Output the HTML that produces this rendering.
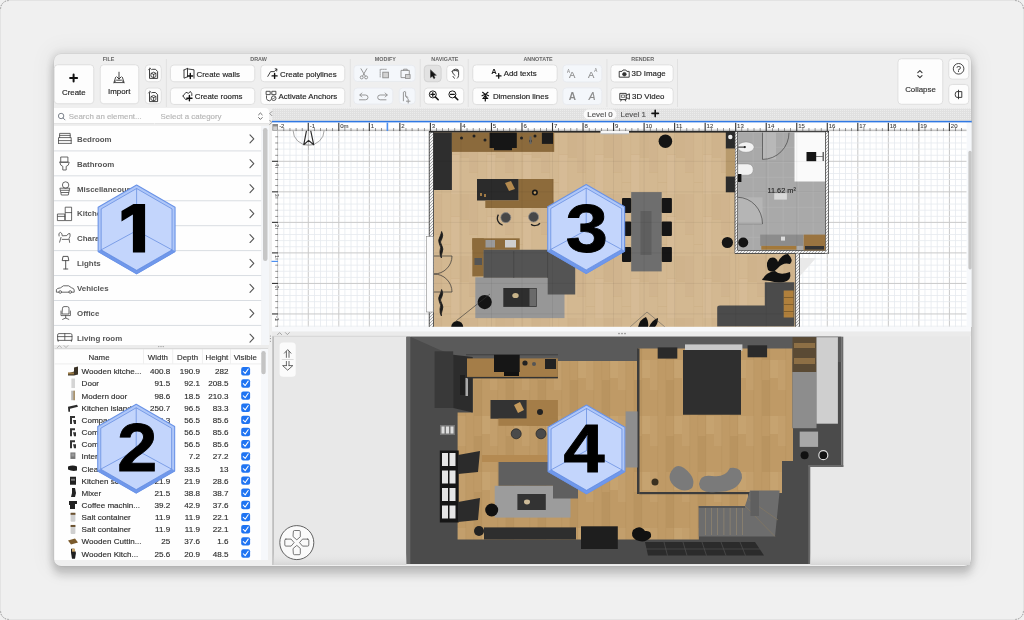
<!DOCTYPE html>
<html><head><meta charset="utf-8">
<style>
*{box-sizing:border-box;margin:0;padding:0}
html,body{width:1024px;height:620px;overflow:hidden;background:#f0f0f0;font-family:"Liberation Sans",sans-serif}
#frame{position:absolute;left:0;top:0;width:1024px;height:620px;border-radius:9px;border:1px solid #e3e3e3;background:#f0f0f0}
#win{position:absolute;left:54px;top:54px;width:917px;height:512px;border-radius:7px;background:#efefef;box-shadow:0 0 0 0.5px rgba(0,0,0,0.06),0 0 6px 3px rgba(0,0,0,0.07),0 0 20px 8px rgba(0,0,0,0.04),0 8px 8px 1px rgba(0,0,0,0.16)}
svg{position:absolute;left:0;top:0;will-change:transform}
text{font-family:"Liberation Sans",sans-serif}
</style></head><body>
<div id="frame"></div>
<div id="win"></div>
<svg width="1024" height="620" viewBox="0 0 1024 620">
<path d="M0.6 8.6 A8 8 0 0 1 8.6 0.6" fill="none" stroke="#777" stroke-width="0.8" stroke-dasharray="1.2 1.6"/>
<path d="M1015.4 0.6 A8 8 0 0 1 1023.4 8.6" fill="none" stroke="#777" stroke-width="0.8" stroke-dasharray="1.2 1.6"/>
<path d="M1023.4 611.4 A8 8 0 0 1 1015.4 619.4" fill="none" stroke="#777" stroke-width="0.8" stroke-dasharray="1.2 1.6"/>
<path d="M8.6 619.4 A8 8 0 0 1 0.6 611.4" fill="none" stroke="#777" stroke-width="0.8" stroke-dasharray="1.2 1.6"/>
<text x="108.50" y="61.47" font-size="5.4" font-weight="bold" fill="#666" stroke="#666" stroke-width="0" text-anchor="middle" >FILE</text>
<text x="258.50" y="61.47" font-size="5.4" font-weight="bold" fill="#666" stroke="#666" stroke-width="0" text-anchor="middle" >DRAW</text>
<text x="385.30" y="61.47" font-size="5.4" font-weight="bold" fill="#666" stroke="#666" stroke-width="0" text-anchor="middle" >MODIFY</text>
<text x="444.80" y="61.47" font-size="5.4" font-weight="bold" fill="#666" stroke="#666" stroke-width="0" text-anchor="middle" >NAVIGATE</text>
<text x="538.00" y="61.47" font-size="5.4" font-weight="bold" fill="#666" stroke="#666" stroke-width="0" text-anchor="middle" >ANNOTATE</text>
<text x="642.70" y="61.47" font-size="5.4" font-weight="bold" fill="#666" stroke="#666" stroke-width="0" text-anchor="middle" >RENDER</text>
<rect x="165.90" y="59.00" width="1.00" height="48.00" rx="0" fill="#e1e1e1" />
<rect x="349.80" y="59.00" width="1.00" height="48.00" rx="0" fill="#e1e1e1" />
<rect x="419.70" y="59.00" width="1.00" height="48.00" rx="0" fill="#e1e1e1" />
<rect x="467.70" y="59.00" width="1.00" height="48.00" rx="0" fill="#e1e1e1" />
<rect x="606.40" y="59.00" width="1.00" height="48.00" rx="0" fill="#e1e1e1" />
<rect x="677.00" y="59.00" width="1.00" height="48.00" rx="0" fill="#e1e1e1" />
<rect x="54.25" y="64.75" width="39.50" height="39.00" rx="3.5" fill="#fdfdfd" stroke="#d9d9d9" stroke-width="0.8"/>
<text x="73.80" y="95.38" font-size="7.9" fill="#222" stroke="#222" stroke-width="0.15" text-anchor="middle" >Create</text>
<rect x="100.25" y="64.75" width="38.50" height="39.00" rx="3.5" fill="#fdfdfd" stroke="#d9d9d9" stroke-width="0.8"/>
<text x="119.20" y="93.88" font-size="7.9" fill="#222" stroke="#222" stroke-width="0.15" text-anchor="middle" >Import</text>
<rect x="145.25" y="64.85" width="16.00" height="16.90" rx="3.5" fill="#fdfdfd" stroke="#d9d9d9" stroke-width="0.8"/>
<rect x="145.25" y="88.05" width="16.00" height="15.70" rx="3.5" fill="#fdfdfd" stroke="#d9d9d9" stroke-width="0.8"/>
<rect x="170.45" y="65.05" width="84.30" height="16.70" rx="3.5" fill="#fdfdfd" stroke="#d9d9d9" stroke-width="0.8"/>
<text x="196.50" y="76.58" font-size="7.9" fill="#222" stroke="#222" stroke-width="0.15" text-anchor="start" >Create walls</text>
<rect x="260.75" y="65.05" width="84.00" height="16.70" rx="3.5" fill="#fdfdfd" stroke="#d9d9d9" stroke-width="0.8"/>
<text x="280.00" y="76.58" font-size="7.9" fill="#222" stroke="#222" stroke-width="0.15" text-anchor="start" >Create polylines</text>
<rect x="170.45" y="87.95" width="84.30" height="16.50" rx="3.5" fill="#fdfdfd" stroke="#d9d9d9" stroke-width="0.8"/>
<text x="194.70" y="98.98" font-size="7.9" fill="#222" stroke="#222" stroke-width="0.15" text-anchor="start" >Create rooms</text>
<rect x="260.75" y="87.95" width="84.00" height="16.50" rx="3.5" fill="#fdfdfd" stroke="#d9d9d9" stroke-width="0.8"/>
<text x="278.50" y="98.98" font-size="7.9" fill="#222" stroke="#222" stroke-width="0.15" text-anchor="start" >Activate Anchors</text>
<rect x="353.85" y="65.25" width="61.30" height="16.20" rx="3.5" fill="#f4f7fb" stroke="#e6e9ee" stroke-width="0.8"/>
<rect x="353.85" y="88.05" width="38.90" height="16.00" rx="3.5" fill="#f4f7fb" stroke="#e6e9ee" stroke-width="0.8"/>
<rect x="399.25" y="88.05" width="15.90" height="16.00" rx="3.5" fill="#f4f7fb" stroke="#e6e9ee" stroke-width="0.8"/>
<rect x="424.25" y="65.25" width="16.90" height="16.50" rx="3.5" fill="#e2e2e2" stroke="#cdcdcd" stroke-width="0.8"/>
<rect x="446.75" y="65.25" width="17.00" height="16.50" rx="3.5" fill="#fdfdfd" stroke="#d9d9d9" stroke-width="0.8"/>
<rect x="424.25" y="88.05" width="39.50" height="16.00" rx="3.5" fill="#fdfdfd" stroke="#d9d9d9" stroke-width="0.8"/>
<rect x="472.75" y="64.85" width="84.40" height="17.10" rx="3.5" fill="#fdfdfd" stroke="#d9d9d9" stroke-width="0.8"/>
<text x="503.70" y="76.48" font-size="7.9" fill="#222" stroke="#222" stroke-width="0.15" text-anchor="start" >Add texts</text>
<rect x="472.75" y="87.85" width="84.40" height="16.70" rx="3.5" fill="#fdfdfd" stroke="#d9d9d9" stroke-width="0.8"/>
<text x="492.90" y="99.08" font-size="7.9" fill="#222" stroke="#222" stroke-width="0.15" text-anchor="start" >Dimension lines</text>
<rect x="562.95" y="64.85" width="38.80" height="17.10" rx="3.5" fill="#f4f7fb" stroke="#e6e9ee" stroke-width="0.8"/>
<rect x="562.95" y="87.85" width="38.80" height="16.70" rx="3.5" fill="#f4f7fb" stroke="#e6e9ee" stroke-width="0.8"/>
<rect x="610.85" y="64.85" width="62.30" height="17.10" rx="3.5" fill="#fdfdfd" stroke="#d9d9d9" stroke-width="0.8"/>
<text x="631.50" y="76.48" font-size="7.9" fill="#222" stroke="#222" stroke-width="0.15" text-anchor="start" >3D Image</text>
<rect x="610.85" y="87.85" width="62.30" height="16.70" rx="3.5" fill="#fdfdfd" stroke="#d9d9d9" stroke-width="0.8"/>
<text x="632.10" y="99.08" font-size="7.9" fill="#222" stroke="#222" stroke-width="0.15" text-anchor="start" >3D Video</text>
<rect x="897.95" y="58.75" width="44.80" height="45.50" rx="3.5" fill="#fdfdfd" stroke="#d9d9d9" stroke-width="0.8"/>
<text x="920.50" y="91.68" font-size="7.9" fill="#333" stroke="#333" stroke-width="0.15" text-anchor="middle" >Collapse</text>
<rect x="948.75" y="58.75" width="20.00" height="20.40" rx="3.5" fill="#fdfdfd" stroke="#d9d9d9" stroke-width="0.8"/>
<rect x="948.75" y="84.45" width="20.00" height="19.80" rx="3.5" fill="#fdfdfd" stroke="#d9d9d9" stroke-width="0.8"/>
<path d="M73.6 74.6 V81.6 M70.1 78.1 H77.1" fill="none" stroke="#111" stroke-width="2" stroke-linecap="round" stroke-linejoin="round" stroke-linecap="butt"/>
<path d="M119 72.2 V79 M116.8 76.8 L119 79 L121.2 76.8" fill="none" stroke="#2a2a2a" stroke-width="0.9" stroke-linecap="round" stroke-linejoin="round" />
<path d="M115.6 77.4 L113.9 82.6 H124.1 L122.4 77.4 M113.9 82.6 L116.4 80.2 H121.6 L124.1 82.6" fill="none" stroke="#2a2a2a" stroke-width="0.85" stroke-linecap="round" stroke-linejoin="round" />
<path d="M149.5 69.5 V78.4 H157.6 V71.5 L155.5 69.3 H152.5" fill="none" stroke="#2a2a2a" stroke-width="0.9" stroke-linecap="round" stroke-linejoin="round" />
<path d="M150 68.2 L148.6 69.8 M150 68.2 L151.5 69.6" fill="none" stroke="#2a2a2a" stroke-width="0.8" stroke-linecap="round" stroke-linejoin="round" />
<path d="M151.3 73.3 L153.6 72.2 L155.9 73.3 V76.6 L153.6 77.7 L151.3 76.6 Z M151.3 73.3 L153.6 74.4 L155.9 73.3 M153.6 74.4 V77.7" fill="none" stroke="#2a2a2a" stroke-width="0.8" stroke-linecap="round" stroke-linejoin="round" />
<path d="M149.5 92.7 V101.60000000000001 H157.6 V94.7 L155.5 92.5 H152.5" fill="none" stroke="#2a2a2a" stroke-width="0.9" stroke-linecap="round" stroke-linejoin="round" />
<path d="M150 91.4 L148.6 93.0 M150 91.4 L151.5 92.8" fill="none" stroke="#2a2a2a" stroke-width="0.8" stroke-linecap="round" stroke-linejoin="round" />
<path d="M151.3 96.5 L153.6 95.4 L155.9 96.5 V99.8 L153.6 100.9 L151.3 99.8 Z M151.3 96.5 L153.6 97.60000000000001 L155.9 96.5 M153.6 97.60000000000001 V100.9" fill="none" stroke="#2a2a2a" stroke-width="0.8" stroke-linecap="round" stroke-linejoin="round" />
<path d="M184 70 L187.5 68.4 L188.5 69 L194 69.8 V78.2 M184 70 V78.2 L187.5 76.8 M187.5 68.4 V76.8" fill="none" stroke="#2a2a2a" stroke-width="0.9" stroke-linecap="round" stroke-linejoin="round" />
<path d="M190.3 73.5 V78.6 M187.9 76 H192.7" fill="none" stroke="#111" stroke-width="1.4" stroke-linecap="round" stroke-linejoin="round" />
<path d="M267.8 76.4 L270.6 71.6 H274.2 L276.8 69.2 M275.2 68.8 L277 69.1 L276.7 71" fill="none" stroke="#2a2a2a" stroke-width="0.9" stroke-linecap="round" stroke-linejoin="round" />
<path d="M274.6 73.4 V78.4 M272.1 75.9 H277.1" fill="none" stroke="#111" stroke-width="1.4" stroke-linecap="round" stroke-linejoin="round" />
<path d="M183 96 L186 92.3 L188.6 93.3 L190.3 91.4 L191.8 93.6 V95.5 M183 96 L185.5 99.5 L187.2 99.6" fill="none" stroke="#2a2a2a" stroke-width="0.9" stroke-linecap="round" stroke-linejoin="round" />
<path d="M189.4 95.5 V100.8 M186.8 98.2 H192" fill="none" stroke="#111" stroke-width="1.4" stroke-linecap="round" stroke-linejoin="round" />
<path d="M266.5 91.3 H270.2 V94.6 H266.5 Z M272.2 91.3 H275.9 V94.6 H272.2 Z" fill="none" stroke="#2a2a2a" stroke-width="0.8" stroke-linecap="round" stroke-linejoin="round" />
<path d="M266.5 95.8 V98.5 Q266.8 100.7 269.6 100.8 Q271 100.5 271 99.8" fill="none" stroke="#2a2a2a" stroke-width="0.8" stroke-linecap="round" stroke-linejoin="round" />
<circle cx="273.7" cy="98.2" r="2.3" fill="none" stroke="#2a2a2a" stroke-width="0.8"/>
<path d="M272.6 98.2 L273.4 99 L274.9 97.4" fill="none" stroke="#2a2a2a" stroke-width="0.6" stroke-linecap="round" stroke-linejoin="round" />
<circle cx="361.7" cy="77.4" r="1.5" fill="none" stroke="#8c8c8c" stroke-width="0.9"/><circle cx="366.1" cy="77.4" r="1.5" fill="none" stroke="#8c8c8c" stroke-width="0.9"/>
<path d="M361 68.8 L365.2 76 M366.8 68.8 L362.6 76" fill="none" stroke="#8c8c8c" stroke-width="0.9" stroke-linecap="round" stroke-linejoin="round" />
<path d="M380.2 77 V69.3 H387.2" fill="none" stroke="#8c8c8c" stroke-width="0.8" stroke-linecap="round" stroke-linejoin="round" stroke-dasharray="1.2 0.9"/>
<rect x="382.8" y="72.2" width="5.6" height="5.6" fill="#d2d2d2" stroke="#8c8c8c" stroke-width="0.9"/>
<path d="M401.4 70.4 H409.3 V77.6 H401.4 Z M403.6 70.4 V69.2 H407.2 V70.4" fill="none" stroke="#8c8c8c" stroke-width="0.9" stroke-linecap="round" stroke-linejoin="round" />
<rect x="405.5" y="74.6" width="4.6" height="3.8" fill="#cfcfcf" stroke="#8c8c8c" stroke-width="0.8"/>
<path d="M360 95 H365.4 Q368 95 368 97.4 Q368 99.8 365.4 99.8 H359.5 M361.8 93 L359.8 95 L361.8 97" fill="none" stroke="#8c8c8c" stroke-width="0.9" stroke-linecap="round" stroke-linejoin="round" />
<path d="M387.2 95 H380.2 Q377.7 95 377.7 97.4 Q377.7 99.8 380.2 99.8 H386 M385.2 93 L387.2 95 L385.2 97" fill="none" stroke="#8c8c8c" stroke-width="0.9" stroke-linecap="round" stroke-linejoin="round" />
<path d="M403.4 100.8 V92.2 L404.8 91.5 M405.6 92 V96.3 L407.6 98.5 M406 96 L408 97.5 M408.2 99.4 V103 M406.4 101.2 H410" fill="none" stroke="#8c8c8c" stroke-width="0.9" stroke-linecap="round" stroke-linejoin="round" />
<path d="M430.6 70.2 L430.6 77.6 L432.4 76 L433.8 78.6 L435 78 L433.7 75.4 L436 75.2 Z" fill="#111" stroke="#111" stroke-width="0.5" stroke-linecap="round" stroke-linejoin="round" />
<path d="M452.2 71.4 L453.2 70 Q455.5 68.6 457.8 69.5 L458.6 71.6 V75.4 Q458.4 77.4 457.4 78.2 M452.2 71.4 L453.2 73.8 L455 75.4 M454.4 78.3 L453 76.4" fill="none" stroke="#2a2a2a" stroke-width="0.9" stroke-linecap="round" stroke-linejoin="round" />
<path d="M453.8 70.6 Q456 70 458 71" fill="none" stroke="#555" stroke-width="1.4" stroke-linecap="round" stroke-linejoin="round" />
<circle cx="432.8" cy="94.4" r="3.5" fill="none" stroke="#111" stroke-width="0.95"/>
<path d="M435.3 96.9 L438.2 99.8" fill="none" stroke="#111" stroke-width="1.5" stroke-linecap="round" stroke-linejoin="round" />
<path d="M430.90000000000003 94.4 H434.7 M432.8 92.5 V96.3" fill="none" stroke="#111" stroke-width="1.2" stroke-linecap="round" stroke-linejoin="round" stroke-linecap="butt"/>
<circle cx="452.4" cy="94.4" r="3.5" fill="none" stroke="#111" stroke-width="0.95"/>
<path d="M454.9 96.9 L457.79999999999995 99.8" fill="none" stroke="#111" stroke-width="1.5" stroke-linecap="round" stroke-linejoin="round" />
<path d="M450.5 94.4 H454.29999999999995" fill="none" stroke="#111" stroke-width="1.2" stroke-linecap="round" stroke-linejoin="round" stroke-linecap="butt"/>
<text x="491.20" y="74.37" font-size="7.6" font-weight="bold" fill="#1a1a1a" stroke="#1a1a1a" stroke-width="0" text-anchor="start" >A</text>
<path d="M498.7 73.6 V78.2 M496.4 75.9 H501" fill="none" stroke="#111" stroke-width="1.3" stroke-linecap="round" stroke-linejoin="round" />
<path d="M482.6 92.3 L485.3 94.4 L488 92.3 M482 95.7 L485.3 94.2 L488.6 95.7 M483.5 97.8 L485.3 95.6 L487.1 97.8" fill="none" stroke="#111" stroke-width="1.1" stroke-linecap="round" stroke-linejoin="round" />
<path d="M485.3 96 V101 M482.8 98.5 H487.8" fill="none" stroke="#111" stroke-width="1.2" stroke-linecap="round" stroke-linejoin="round" />
<text x="572.20" y="77.66" font-size="9.5" fill="#8a8a8a" stroke="#8a8a8a" stroke-width="0.15" text-anchor="middle" >A</text>
<text x="568.50" y="72.64" font-size="4.5" fill="#8a8a8a" stroke="#8a8a8a" stroke-width="0.08" text-anchor="middle" >A</text>
<text x="591.20" y="77.66" font-size="9.5" fill="#8a8a8a" stroke="#8a8a8a" stroke-width="0.15" text-anchor="middle" >A</text>
<text x="595.80" y="72.24" font-size="4.5" fill="#8a8a8a" stroke="#8a8a8a" stroke-width="0.08" text-anchor="middle" >A</text>
<text x="572.40" y="99.84" font-size="10" font-weight="bold" fill="#8a8a8a" stroke="#8a8a8a" stroke-width="0" text-anchor="middle" >A</text>
<text x="592.00" y="99.84" font-size="10" fill="#8a8a8a" stroke="#8a8a8a" stroke-width="0.15" text-anchor="middle" font-style="italic">A</text>
<path d="M619.6 71.4 H622 L623 70 H625.8 L626.8 71.4 H629.2 V77.2 H619.6 Z" fill="none" stroke="#2a2a2a" stroke-width="0.9" stroke-linecap="round" stroke-linejoin="round" />
<circle cx="624.4" cy="74.2" r="1.8" fill="#333" stroke="#2a2a2a" stroke-width="0.7"/>
<path d="M620.2 93.4 H626.2 V99.6 H620.2 Z M626.2 95.4 L629.4 93.8 V99.2 L626.2 97.6 M621.4 99.6 L620.8 101 M625 99.6 L625.6 101" fill="none" stroke="#2a2a2a" stroke-width="0.9" stroke-linecap="round" stroke-linejoin="round" />
<path d="M621.8 95 H624.6 V97.4 H621.8 Z" fill="none" stroke="#2a2a2a" stroke-width="0.6" stroke-linecap="round" stroke-linejoin="round" />
<path d="M917.8 72.6 L919.9 70.6 L922 72.6 M917.8 75.6 L919.9 77.6 L922 75.6" fill="none" stroke="#333" stroke-width="1.1" stroke-linecap="round" stroke-linejoin="round" />
<circle cx="958.6" cy="68.8" r="5.3" fill="none" stroke="#333" stroke-width="0.9"/>
<text x="958.60" y="71.73" font-size="8.6" fill="#333" stroke="#333" stroke-width="0.15" text-anchor="middle" >?</text>
<path d="M958.5 91.6 H961.8 V97.4 H958.5 M958.5 91.6 H957 Q955.2 91.6 955.2 94.5 Q955.2 97.4 957 97.4 H958.5 M958.5 90.2 V98.8" fill="none" stroke="#333" stroke-width="0.95" stroke-linecap="round" stroke-linejoin="round" />
<path d="M54 108 H265 Q269 108 269 112 V123 H54 Z" fill="#fefefe"/>
<rect x="54.00" y="123.00" width="100.00" height="1.20" rx="0" fill="#e4e4e4" />
<rect x="155.00" y="123.00" width="114.00" height="1.20" rx="0" fill="#e4e4e4" />
<circle cx="61.1" cy="116" r="2.7" fill="none" stroke="#6f7680" stroke-width="0.9"/>
<path d="M63.1 118 L65 119.9" fill="none" stroke="#6f7680" stroke-width="0.9" stroke-linecap="round" stroke-linejoin="round" />
<text x="68.80" y="119.08" font-size="7.9" fill="#b5b5b5" stroke="#b5b5b5" stroke-width="0.15" text-anchor="start" >Search an element...</text>
<text x="160.60" y="119.08" font-size="7.9" fill="#b5b5b5" stroke="#b5b5b5" stroke-width="0.15" text-anchor="start" >Select a category</text>
<path d="M258.6 114.8 L260.4 113 L262.2 114.8 M258.6 117.6 L260.4 119.4 L262.2 117.6" fill="none" stroke="#555" stroke-width="0.9" stroke-linecap="round" stroke-linejoin="round" />
<rect x="54.00" y="126.00" width="207.50" height="219.00" rx="0" fill="#fefefe" />
<rect x="54.00" y="150.40" width="207.50" height="1.00" rx="0" fill="#d9dde2" />
<text x="77.00" y="141.68" font-size="7.9" font-weight="bold" fill="#555" stroke="#555" stroke-width="0" text-anchor="start" >Bedroom</text>
<path d="M250 134.8 L253.8 138.8 L250 142.8" fill="none" stroke="#555" stroke-width="1.1" stroke-linecap="round" stroke-linejoin="round" />
<rect x="54.00" y="175.33" width="207.50" height="1.00" rx="0" fill="#d9dde2" />
<text x="77.00" y="166.61" font-size="7.9" font-weight="bold" fill="#555" stroke="#555" stroke-width="0" text-anchor="start" >Bathroom</text>
<path d="M250 159.73 L253.8 163.73 L250 167.73" fill="none" stroke="#555" stroke-width="1.1" stroke-linecap="round" stroke-linejoin="round" />
<rect x="54.00" y="200.26" width="207.50" height="1.00" rx="0" fill="#d9dde2" />
<text x="77.00" y="191.54" font-size="7.9" font-weight="bold" fill="#555" stroke="#555" stroke-width="0" text-anchor="start" >Miscellaneous</text>
<path d="M250 184.66 L253.8 188.66 L250 192.66" fill="none" stroke="#555" stroke-width="1.1" stroke-linecap="round" stroke-linejoin="round" />
<rect x="54.00" y="225.19" width="207.50" height="1.00" rx="0" fill="#d9dde2" />
<text x="77.00" y="216.47" font-size="7.9" font-weight="bold" fill="#555" stroke="#555" stroke-width="0" text-anchor="start" >Kitchen</text>
<path d="M250 209.59 L253.8 213.59 L250 217.59" fill="none" stroke="#555" stroke-width="1.1" stroke-linecap="round" stroke-linejoin="round" />
<rect x="54.00" y="250.12" width="207.50" height="1.00" rx="0" fill="#d9dde2" />
<text x="77.00" y="241.40" font-size="7.9" font-weight="bold" fill="#555" stroke="#555" stroke-width="0" text-anchor="start" >Characters</text>
<path d="M250 234.52 L253.8 238.52 L250 242.52" fill="none" stroke="#555" stroke-width="1.1" stroke-linecap="round" stroke-linejoin="round" />
<rect x="54.00" y="275.05" width="207.50" height="1.00" rx="0" fill="#d9dde2" />
<text x="77.00" y="266.33" font-size="7.9" font-weight="bold" fill="#555" stroke="#555" stroke-width="0" text-anchor="start" >Lights</text>
<path d="M250 259.45000000000005 L253.8 263.45000000000005 L250 267.45000000000005" fill="none" stroke="#555" stroke-width="1.1" stroke-linecap="round" stroke-linejoin="round" />
<rect x="54.00" y="299.98" width="207.50" height="1.00" rx="0" fill="#d9dde2" />
<text x="77.00" y="291.26" font-size="7.9" font-weight="bold" fill="#555" stroke="#555" stroke-width="0" text-anchor="start" >Vehicles</text>
<path d="M250 284.38 L253.8 288.38 L250 292.38" fill="none" stroke="#555" stroke-width="1.1" stroke-linecap="round" stroke-linejoin="round" />
<rect x="54.00" y="324.91" width="207.50" height="1.00" rx="0" fill="#d9dde2" />
<text x="77.00" y="316.19" font-size="7.9" font-weight="bold" fill="#555" stroke="#555" stroke-width="0" text-anchor="start" >Office</text>
<path d="M250 309.31 L253.8 313.31 L250 317.31" fill="none" stroke="#555" stroke-width="1.1" stroke-linecap="round" stroke-linejoin="round" />
<text x="77.00" y="341.12" font-size="7.9" font-weight="bold" fill="#555" stroke="#555" stroke-width="0" text-anchor="start" >Living room</text>
<path d="M250 334.24 L253.8 338.24 L250 342.24" fill="none" stroke="#555" stroke-width="1.1" stroke-linecap="round" stroke-linejoin="round" />
<rect x="261.50" y="126.00" width="7.50" height="219.00" rx="0" fill="#f4f6f9" />
<rect x="263.00" y="128.00" width="4.50" height="133.00" rx="2.2" fill="#c6c6c6" />
<path d="M58.5 143.4 V137.6 H71.2 V143.4 M58.5 140.6 H71.2 M58.5 143.4 H71.2 M59.6 137.6 V133.4 H70.2 V137.6 M59.6 135.4 H70.2" fill="none" stroke="#444" stroke-width="0.8" stroke-linecap="round" stroke-linejoin="round" />
<path d="M61.1 157 H67.9 V162.2 H61.1 Z M59.8 162.2 H69.2 Q68.8 166 66.2 166.4 V170 H62.8 V166.4 Q60.2 166 59.8 162.2" fill="none" stroke="#444" stroke-width="0.8" stroke-linecap="round" stroke-linejoin="round" />
<path d="M60.3 188.2 H69.7 L68.3 195 H61.7 Z M61 190.3 H69 M61.4 192.5 H68.6" fill="none" stroke="#444" stroke-width="0.8" stroke-linecap="round" stroke-linejoin="round" />
<circle cx="65.6" cy="185" r="3.2" fill="none" stroke="#444" stroke-width="0.8"/>
<path d="M57.8 214 H64.8 V220.6 H57.8 Z M57.8 216.4 H64.8 M65.6 207.2 H71.6 V220.6 H65.6 Z M65.6 212.6 H71.6" fill="none" stroke="#444" stroke-width="0.8" stroke-linecap="round" stroke-linejoin="round" />
<path d="M59 236 Q58 232.8 60.4 232.4 Q62.6 233.4 62.2 235.8 L66.8 235.6 Q68 233 70 233.6 Q70.6 236.4 69 238.4 L69.6 242.4 M61 237.4 L59.6 242.2 M62.2 239.4 H68.4" fill="none" stroke="#444" stroke-width="0.8" stroke-linecap="round" stroke-linejoin="round" />
<path d="M63.4 256.4 H68 L68.8 260.6 H62.6 Z M65.7 260.6 V268.8 M63.6 269 H67.8" fill="none" stroke="#444" stroke-width="0.9" stroke-linecap="round" stroke-linejoin="round" />
<path d="M56.4 291.8 V289.6 Q57 288.2 60.6 287.8 L63.4 285.8 H68.6 L71.6 287.8 Q74 288.2 74.2 290 V291.8 Z" fill="none" stroke="#444" stroke-width="0.8" stroke-linecap="round" stroke-linejoin="round" />
<circle cx="60.2" cy="292" r="1.3" fill="#fff" stroke="#444" stroke-width="0.8"/><circle cx="70.2" cy="292" r="1.3" fill="#fff" stroke="#444" stroke-width="0.8"/>
<path d="M62.4 308.4 Q62.4 306.6 64 306.6 H67.4 Q69 306.6 69 308.4 V314 H62.4 Z M61 311 V315.6 H70.4 V311 M65.7 315.6 V318 M62.6 319.4 L65.7 318 L68.8 319.4" fill="none" stroke="#444" stroke-width="0.8" stroke-linecap="round" stroke-linejoin="round" />
<path d="M57.6 340 V335 Q57.6 333.6 59 333.6 H70.6 Q72 333.6 72 335 V340 Z M57.6 336.6 H72 M64.8 333.6 V340 M58.2 340 V341.4 M71.4 340 V341.4" fill="none" stroke="#444" stroke-width="0.8" stroke-linecap="round" stroke-linejoin="round" />
<rect x="54.00" y="345.00" width="215.00" height="4.00" rx="0" fill="#ececec" />
<path d="M57.4 347.6 L59.4 345.6 L61.4 347.6 M64 345.6 L66 347.6 L68 345.6" fill="none" stroke="#999" stroke-width="0.7" stroke-linecap="round" stroke-linejoin="round" />
<circle cx="158.8" cy="346.6" r="0.55" fill="#888"/>
<circle cx="161" cy="346.6" r="0.55" fill="#888"/>
<circle cx="163.2" cy="346.6" r="0.55" fill="#888"/>
<rect x="54.60" y="349.00" width="213.40" height="211.00" rx="0" fill="#fefefe" />
<rect x="54.60" y="348.40" width="213.40" height="0.80" rx="0" fill="#cdcdcd" />
<rect x="54.60" y="363.60" width="206.40" height="0.70" rx="0" fill="#e6e6e6" />
<rect x="143.15" y="349.00" width="0.70" height="14.60" rx="0" fill="#e8e8e8" />
<rect x="172.45" y="349.00" width="0.70" height="14.60" rx="0" fill="#e8e8e8" />
<rect x="201.95" y="349.00" width="0.70" height="14.60" rx="0" fill="#e8e8e8" />
<rect x="230.15" y="349.00" width="0.70" height="14.60" rx="0" fill="#e8e8e8" />
<rect x="261.00" y="349.00" width="7.00" height="211.00" rx="0" fill="#f6f8fb" />
<rect x="261.30" y="351.00" width="4.40" height="23.30" rx="2.2" fill="#c4c4c4" />
<text x="99.00" y="360.08" font-size="7.9" fill="#333" stroke="#333" stroke-width="0.15" text-anchor="middle" >Name</text>
<text x="157.90" y="360.08" font-size="7.9" fill="#333" stroke="#333" stroke-width="0.15" text-anchor="middle" >Width</text>
<text x="187.50" y="360.08" font-size="7.9" fill="#333" stroke="#333" stroke-width="0.15" text-anchor="middle" >Depth</text>
<text x="216.90" y="360.08" font-size="7.9" fill="#333" stroke="#333" stroke-width="0.15" text-anchor="middle" >Height</text>
<text x="245.30" y="360.08" font-size="7.9" fill="#333" stroke="#333" stroke-width="0.15" text-anchor="middle" >Visible</text>
<text x="81.60" y="374.33" font-size="8.05" fill="#2e2e2e" stroke="#2e2e2e" stroke-width="0.15" text-anchor="start" >Wooden kitche...</text>
<text x="170.20" y="374.33" font-size="8.05" fill="#2e2e2e" stroke="#2e2e2e" stroke-width="0.15" text-anchor="end" >400.8</text>
<text x="199.90" y="374.33" font-size="8.05" fill="#2e2e2e" stroke="#2e2e2e" stroke-width="0.15" text-anchor="end" >190.9</text>
<text x="228.50" y="374.33" font-size="8.05" fill="#2e2e2e" stroke="#2e2e2e" stroke-width="0.15" text-anchor="end" >282</text>
<rect x="241.20" y="367.10" width="8.90" height="8.40" rx="2" fill="#1f74f2" />
<path d="M243.3 371.5 L245.2 373.4 L248.2 369.0" fill="none" stroke="#fff" stroke-width="1.05" stroke-linecap="round" stroke-linejoin="round" />
<text x="81.60" y="386.48" font-size="8.05" fill="#2e2e2e" stroke="#2e2e2e" stroke-width="0.15" text-anchor="start" >Door</text>
<text x="170.20" y="386.48" font-size="8.05" fill="#2e2e2e" stroke="#2e2e2e" stroke-width="0.15" text-anchor="end" >91.5</text>
<text x="199.90" y="386.48" font-size="8.05" fill="#2e2e2e" stroke="#2e2e2e" stroke-width="0.15" text-anchor="end" >92.1</text>
<text x="228.50" y="386.48" font-size="8.05" fill="#2e2e2e" stroke="#2e2e2e" stroke-width="0.15" text-anchor="end" >208.5</text>
<rect x="241.20" y="379.25" width="8.90" height="8.40" rx="2" fill="#1f74f2" />
<path d="M243.3 383.65 L245.2 385.54999999999995 L248.2 381.15" fill="none" stroke="#fff" stroke-width="1.05" stroke-linecap="round" stroke-linejoin="round" />
<text x="81.60" y="398.63" font-size="8.05" fill="#2e2e2e" stroke="#2e2e2e" stroke-width="0.15" text-anchor="start" >Modern door</text>
<text x="170.20" y="398.63" font-size="8.05" fill="#2e2e2e" stroke="#2e2e2e" stroke-width="0.15" text-anchor="end" >98.6</text>
<text x="199.90" y="398.63" font-size="8.05" fill="#2e2e2e" stroke="#2e2e2e" stroke-width="0.15" text-anchor="end" >18.5</text>
<text x="228.50" y="398.63" font-size="8.05" fill="#2e2e2e" stroke="#2e2e2e" stroke-width="0.15" text-anchor="end" >210.3</text>
<rect x="241.20" y="391.40" width="8.90" height="8.40" rx="2" fill="#1f74f2" />
<path d="M243.3 395.8 L245.2 397.7 L248.2 393.3" fill="none" stroke="#fff" stroke-width="1.05" stroke-linecap="round" stroke-linejoin="round" />
<text x="81.60" y="410.78" font-size="8.05" fill="#2e2e2e" stroke="#2e2e2e" stroke-width="0.15" text-anchor="start" >Kitchen island</text>
<text x="170.20" y="410.78" font-size="8.05" fill="#2e2e2e" stroke="#2e2e2e" stroke-width="0.15" text-anchor="end" >250.7</text>
<text x="199.90" y="410.78" font-size="8.05" fill="#2e2e2e" stroke="#2e2e2e" stroke-width="0.15" text-anchor="end" >96.5</text>
<text x="228.50" y="410.78" font-size="8.05" fill="#2e2e2e" stroke="#2e2e2e" stroke-width="0.15" text-anchor="end" >83.3</text>
<rect x="241.20" y="403.55" width="8.90" height="8.40" rx="2" fill="#1f74f2" />
<path d="M243.3 407.95 L245.2 409.84999999999997 L248.2 405.45" fill="none" stroke="#fff" stroke-width="1.05" stroke-linecap="round" stroke-linejoin="round" />
<text x="81.60" y="422.93" font-size="8.05" fill="#2e2e2e" stroke="#2e2e2e" stroke-width="0.15" text-anchor="start" >Compact oven</text>
<text x="170.20" y="422.93" font-size="8.05" fill="#2e2e2e" stroke="#2e2e2e" stroke-width="0.15" text-anchor="end" >56.3</text>
<text x="199.90" y="422.93" font-size="8.05" fill="#2e2e2e" stroke="#2e2e2e" stroke-width="0.15" text-anchor="end" >56.5</text>
<text x="228.50" y="422.93" font-size="8.05" fill="#2e2e2e" stroke="#2e2e2e" stroke-width="0.15" text-anchor="end" >85.6</text>
<rect x="241.20" y="415.70" width="8.90" height="8.40" rx="2" fill="#1f74f2" />
<path d="M243.3 420.1 L245.2 422.0 L248.2 417.6" fill="none" stroke="#fff" stroke-width="1.05" stroke-linecap="round" stroke-linejoin="round" />
<text x="81.60" y="435.08" font-size="8.05" fill="#2e2e2e" stroke="#2e2e2e" stroke-width="0.15" text-anchor="start" >Compact oven</text>
<text x="170.20" y="435.08" font-size="8.05" fill="#2e2e2e" stroke="#2e2e2e" stroke-width="0.15" text-anchor="end" >56.3</text>
<text x="199.90" y="435.08" font-size="8.05" fill="#2e2e2e" stroke="#2e2e2e" stroke-width="0.15" text-anchor="end" >56.5</text>
<text x="228.50" y="435.08" font-size="8.05" fill="#2e2e2e" stroke="#2e2e2e" stroke-width="0.15" text-anchor="end" >85.6</text>
<rect x="241.20" y="427.85" width="8.90" height="8.40" rx="2" fill="#1f74f2" />
<path d="M243.3 432.25 L245.2 434.15 L248.2 429.75" fill="none" stroke="#fff" stroke-width="1.05" stroke-linecap="round" stroke-linejoin="round" />
<text x="81.60" y="447.23" font-size="8.05" fill="#2e2e2e" stroke="#2e2e2e" stroke-width="0.15" text-anchor="start" >Compact oven</text>
<text x="170.20" y="447.23" font-size="8.05" fill="#2e2e2e" stroke="#2e2e2e" stroke-width="0.15" text-anchor="end" >56.3</text>
<text x="199.90" y="447.23" font-size="8.05" fill="#2e2e2e" stroke="#2e2e2e" stroke-width="0.15" text-anchor="end" >56.5</text>
<text x="228.50" y="447.23" font-size="8.05" fill="#2e2e2e" stroke="#2e2e2e" stroke-width="0.15" text-anchor="end" >85.6</text>
<rect x="241.20" y="440.00" width="8.90" height="8.40" rx="2" fill="#1f74f2" />
<path d="M243.3 444.4 L245.2 446.29999999999995 L248.2 441.9" fill="none" stroke="#fff" stroke-width="1.05" stroke-linecap="round" stroke-linejoin="round" />
<text x="81.60" y="459.38" font-size="8.05" fill="#2e2e2e" stroke="#2e2e2e" stroke-width="0.15" text-anchor="start" >Interior light</text>
<text x="170.20" y="459.38" font-size="8.05" fill="#2e2e2e" stroke="#2e2e2e" stroke-width="0.15" text-anchor="end" >7.2</text>
<text x="199.90" y="459.38" font-size="8.05" fill="#2e2e2e" stroke="#2e2e2e" stroke-width="0.15" text-anchor="end" >7.2</text>
<text x="228.50" y="459.38" font-size="8.05" fill="#2e2e2e" stroke="#2e2e2e" stroke-width="0.15" text-anchor="end" >27.2</text>
<rect x="241.20" y="452.15" width="8.90" height="8.40" rx="2" fill="#1f74f2" />
<path d="M243.3 456.55 L245.2 458.45 L248.2 454.05" fill="none" stroke="#fff" stroke-width="1.05" stroke-linecap="round" stroke-linejoin="round" />
<text x="81.60" y="471.53" font-size="8.05" fill="#2e2e2e" stroke="#2e2e2e" stroke-width="0.15" text-anchor="start" >Cleaning...</text>
<text x="170.20" y="471.53" font-size="8.05" fill="#2e2e2e" stroke="#2e2e2e" stroke-width="0.15" text-anchor="end" >33.5</text>
<text x="199.90" y="471.53" font-size="8.05" fill="#2e2e2e" stroke="#2e2e2e" stroke-width="0.15" text-anchor="end" >33.5</text>
<text x="228.50" y="471.53" font-size="8.05" fill="#2e2e2e" stroke="#2e2e2e" stroke-width="0.15" text-anchor="end" >13</text>
<rect x="241.20" y="464.30" width="8.90" height="8.40" rx="2" fill="#1f74f2" />
<path d="M243.3 468.7 L245.2 470.59999999999997 L248.2 466.2" fill="none" stroke="#fff" stroke-width="1.05" stroke-linecap="round" stroke-linejoin="round" />
<text x="81.60" y="483.68" font-size="8.05" fill="#2e2e2e" stroke="#2e2e2e" stroke-width="0.15" text-anchor="start" >Kitchen scale</text>
<text x="170.20" y="483.68" font-size="8.05" fill="#2e2e2e" stroke="#2e2e2e" stroke-width="0.15" text-anchor="end" >21.9</text>
<text x="199.90" y="483.68" font-size="8.05" fill="#2e2e2e" stroke="#2e2e2e" stroke-width="0.15" text-anchor="end" >21.9</text>
<text x="228.50" y="483.68" font-size="8.05" fill="#2e2e2e" stroke="#2e2e2e" stroke-width="0.15" text-anchor="end" >28.6</text>
<rect x="241.20" y="476.45" width="8.90" height="8.40" rx="2" fill="#1f74f2" />
<path d="M243.3 480.85 L245.2 482.75 L248.2 478.35" fill="none" stroke="#fff" stroke-width="1.05" stroke-linecap="round" stroke-linejoin="round" />
<text x="81.60" y="495.83" font-size="8.05" fill="#2e2e2e" stroke="#2e2e2e" stroke-width="0.15" text-anchor="start" >Mixer</text>
<text x="170.20" y="495.83" font-size="8.05" fill="#2e2e2e" stroke="#2e2e2e" stroke-width="0.15" text-anchor="end" >21.5</text>
<text x="199.90" y="495.83" font-size="8.05" fill="#2e2e2e" stroke="#2e2e2e" stroke-width="0.15" text-anchor="end" >38.8</text>
<text x="228.50" y="495.83" font-size="8.05" fill="#2e2e2e" stroke="#2e2e2e" stroke-width="0.15" text-anchor="end" >38.7</text>
<rect x="241.20" y="488.60" width="8.90" height="8.40" rx="2" fill="#1f74f2" />
<path d="M243.3 493.0 L245.2 494.9 L248.2 490.5" fill="none" stroke="#fff" stroke-width="1.05" stroke-linecap="round" stroke-linejoin="round" />
<text x="81.60" y="507.98" font-size="8.05" fill="#2e2e2e" stroke="#2e2e2e" stroke-width="0.15" text-anchor="start" >Coffee machin...</text>
<text x="170.20" y="507.98" font-size="8.05" fill="#2e2e2e" stroke="#2e2e2e" stroke-width="0.15" text-anchor="end" >39.2</text>
<text x="199.90" y="507.98" font-size="8.05" fill="#2e2e2e" stroke="#2e2e2e" stroke-width="0.15" text-anchor="end" >42.9</text>
<text x="228.50" y="507.98" font-size="8.05" fill="#2e2e2e" stroke="#2e2e2e" stroke-width="0.15" text-anchor="end" >37.6</text>
<rect x="241.20" y="500.75" width="8.90" height="8.40" rx="2" fill="#1f74f2" />
<path d="M243.3 505.15 L245.2 507.04999999999995 L248.2 502.65" fill="none" stroke="#fff" stroke-width="1.05" stroke-linecap="round" stroke-linejoin="round" />
<text x="81.60" y="520.13" font-size="8.05" fill="#2e2e2e" stroke="#2e2e2e" stroke-width="0.15" text-anchor="start" >Salt container</text>
<text x="170.20" y="520.13" font-size="8.05" fill="#2e2e2e" stroke="#2e2e2e" stroke-width="0.15" text-anchor="end" >11.9</text>
<text x="199.90" y="520.13" font-size="8.05" fill="#2e2e2e" stroke="#2e2e2e" stroke-width="0.15" text-anchor="end" >11.9</text>
<text x="228.50" y="520.13" font-size="8.05" fill="#2e2e2e" stroke="#2e2e2e" stroke-width="0.15" text-anchor="end" >22.1</text>
<rect x="241.20" y="512.90" width="8.90" height="8.40" rx="2" fill="#1f74f2" />
<path d="M243.3 517.3000000000001 L245.2 519.2 L248.2 514.8000000000001" fill="none" stroke="#fff" stroke-width="1.05" stroke-linecap="round" stroke-linejoin="round" />
<text x="81.60" y="532.28" font-size="8.05" fill="#2e2e2e" stroke="#2e2e2e" stroke-width="0.15" text-anchor="start" >Salt container</text>
<text x="170.20" y="532.28" font-size="8.05" fill="#2e2e2e" stroke="#2e2e2e" stroke-width="0.15" text-anchor="end" >11.9</text>
<text x="199.90" y="532.28" font-size="8.05" fill="#2e2e2e" stroke="#2e2e2e" stroke-width="0.15" text-anchor="end" >11.9</text>
<text x="228.50" y="532.28" font-size="8.05" fill="#2e2e2e" stroke="#2e2e2e" stroke-width="0.15" text-anchor="end" >22.1</text>
<rect x="241.20" y="525.05" width="8.90" height="8.40" rx="2" fill="#1f74f2" />
<path d="M243.3 529.45 L245.2 531.35 L248.2 526.95" fill="none" stroke="#fff" stroke-width="1.05" stroke-linecap="round" stroke-linejoin="round" />
<text x="81.60" y="544.43" font-size="8.05" fill="#2e2e2e" stroke="#2e2e2e" stroke-width="0.15" text-anchor="start" >Wooden Cuttin...</text>
<text x="170.20" y="544.43" font-size="8.05" fill="#2e2e2e" stroke="#2e2e2e" stroke-width="0.15" text-anchor="end" >25</text>
<text x="199.90" y="544.43" font-size="8.05" fill="#2e2e2e" stroke="#2e2e2e" stroke-width="0.15" text-anchor="end" >37.6</text>
<text x="228.50" y="544.43" font-size="8.05" fill="#2e2e2e" stroke="#2e2e2e" stroke-width="0.15" text-anchor="end" >1.6</text>
<rect x="241.20" y="537.20" width="8.90" height="8.40" rx="2" fill="#1f74f2" />
<path d="M243.3 541.6 L245.2 543.5 L248.2 539.1" fill="none" stroke="#fff" stroke-width="1.05" stroke-linecap="round" stroke-linejoin="round" />
<text x="81.60" y="556.58" font-size="8.05" fill="#2e2e2e" stroke="#2e2e2e" stroke-width="0.15" text-anchor="start" >Wooden Kitch...</text>
<text x="170.20" y="556.58" font-size="8.05" fill="#2e2e2e" stroke="#2e2e2e" stroke-width="0.15" text-anchor="end" >25.6</text>
<text x="199.90" y="556.58" font-size="8.05" fill="#2e2e2e" stroke="#2e2e2e" stroke-width="0.15" text-anchor="end" >20.9</text>
<text x="228.50" y="556.58" font-size="8.05" fill="#2e2e2e" stroke="#2e2e2e" stroke-width="0.15" text-anchor="end" >48.5</text>
<rect x="241.20" y="549.35" width="8.90" height="8.40" rx="2" fill="#1f74f2" />
<path d="M243.3 553.75 L245.2 555.65 L248.2 551.25" fill="none" stroke="#fff" stroke-width="1.05" stroke-linecap="round" stroke-linejoin="round" />
<g transform="translate(73,371.40)"><path d="M-5 2 L1 0 V-4 L5 -5 V3 L1 4 L-5 4 Z" fill="#3a3226"/><rect x="-5" y="1" width="6" height="2" fill="#9a7a45"/></g>
<g transform="translate(73,383.55)"><rect x="-1.6" y="-5" width="3.6" height="9.5" fill="#d5d5d5"/></g>
<g transform="translate(73,395.70)"><rect x="-1.8" y="-5" width="3.8" height="9.5" fill="#b8b8b8"/><rect x="0.6" y="-5" width="1" height="9.5" fill="#a07a3a"/></g>
<g transform="translate(73,407.85)"><path d="M-5 -1 L4 -3 L5 -1 L-3 1 L-3 4 L-4.6 4 Z" fill="#2b2b2b"/></g>
<g transform="translate(73,420.00)"><path d="M-3 -4 H2 V-2 H-1 V4 H-3 Z M0 0 H3 V4 H1 Z" fill="#333"/></g>
<g transform="translate(73,432.15)"><path d="M-3 -4 H2 V-2 H-1 V4 H-3 Z M0 0 H3 V4 H1 Z" fill="#333"/></g>
<g transform="translate(73,444.30)"><path d="M-3 -4 H2 V-2 H-1 V4 H-3 Z M0 0 H3 V4 H1 Z" fill="#333"/></g>
<g transform="translate(73,456.45)"><rect x="-2.6" y="-4" width="5" height="6.5" fill="#777"/><rect x="-1.6" y="-3" width="3" height="3" fill="#999"/></g>
<g transform="translate(73,468.60)"><path d="M-5 -2 Q0 -4 4 -2 L4 2 Q-1 3 -5 1 Z" fill="#1f1f1f"/></g>
<g transform="translate(73,480.75)"><path d="M-3 -4 H3 V4 H-3 Z" fill="#222"/><rect x="-2" y="-2" width="4" height="2" fill="#777"/></g>
<g transform="translate(73,492.90)"><path d="M-1 -5 L2 -5 L3 0 L2 4 L-2 4 L-1 0 Z" fill="#222"/></g>
<g transform="translate(73,505.05)"><path d="M-4 -4 H4 V-1 H2 V4 H-3 V0 H-4 Z" fill="#222"/></g>
<g transform="translate(73,517.20)"><rect x="-2.4" y="-4.4" width="4.8" height="9" rx="1" fill="#cfcfcf"/><rect x="-2.4" y="-4.4" width="4.8" height="2" fill="#6b5230"/></g>
<g transform="translate(73,529.35)"><rect x="-2.4" y="-4.4" width="4.8" height="9" rx="1" fill="#cfcfcf"/><rect x="-2.4" y="-4.4" width="4.8" height="2" fill="#6b5230"/></g>
<g transform="translate(73,541.50)"><path d="M-5 -1 L2 -3 L5 1 L-2 3 Z" fill="#7a5a2c"/></g>
<g transform="translate(73,553.65)"><path d="M-2 -5 L1 -5 L3 -1 L2 5 L-1 5 L-2 -1 Z" fill="#1f1f1f"/><rect x="-1" y="-5" width="3" height="3" fill="#c9a66b"/></g>
<defs><pattern id="dots" patternUnits="userSpaceOnUse" width="2" height="2"><rect width="2" height="2" fill="#e0e0e0"/><rect width="1" height="1" fill="#ececec"/></pattern></defs>
<rect x="272.00" y="108.40" width="699.00" height="12.40" rx="0" fill="url(#dots)" />
<rect x="272.00" y="119.80" width="699.00" height="1.00" rx="0" fill="#ece6dc" />
<path d="M271.8 111.6 L269.8 113.6 L271.8 115.6" fill="none" stroke="#666" stroke-width="0.7" stroke-linecap="round" stroke-linejoin="round" />
<path d="M269.8 120.4 L271.8 122.4 L269.8 124.4" fill="none" stroke="#666" stroke-width="0.7" stroke-linecap="round" stroke-linejoin="round" />
<rect x="583.6" y="109.6" width="32.8" height="9.6" rx="4.8" fill="#fbfbfb"/>
<text x="600.00" y="117.28" font-size="7.9" fill="#555" stroke="#555" stroke-width="0.15" text-anchor="middle" >Level 0</text>
<text x="620.50" y="117.28" font-size="7.9" fill="#555" stroke="#555" stroke-width="0.15" text-anchor="start" >Level 1</text>
<path d="M655.2 110.2 V116.6 M652 113.4 H658.4" fill="none" stroke="#111" stroke-width="1.6" stroke-linecap="round" stroke-linejoin="round" stroke-linecap="butt"/>
<rect x="272.00" y="122.60" width="696.40" height="204.40" rx="0" fill="#ffffff" />
<rect x="283.45" y="131.00" width="0.80" height="196.00" rx="0" fill="#e6eaef" />
<rect x="289.55" y="131.00" width="0.80" height="196.00" rx="0" fill="#e6eaef" />
<rect x="295.66" y="131.00" width="0.80" height="196.00" rx="0" fill="#e6eaef" />
<rect x="301.76" y="131.00" width="0.80" height="196.00" rx="0" fill="#e6eaef" />
<rect x="307.77" y="131.00" width="1.00" height="196.00" rx="0" fill="#c9c9c9" />
<rect x="313.98" y="131.00" width="0.80" height="196.00" rx="0" fill="#e6eaef" />
<rect x="320.08" y="131.00" width="0.80" height="196.00" rx="0" fill="#e6eaef" />
<rect x="326.19" y="131.00" width="0.80" height="196.00" rx="0" fill="#e6eaef" />
<rect x="332.29" y="131.00" width="0.80" height="196.00" rx="0" fill="#e6eaef" />
<rect x="338.30" y="131.00" width="1.00" height="196.00" rx="0" fill="#c9c9c9" />
<rect x="344.51" y="131.00" width="0.80" height="196.00" rx="0" fill="#e6eaef" />
<rect x="350.61" y="131.00" width="0.80" height="196.00" rx="0" fill="#e6eaef" />
<rect x="356.72" y="131.00" width="0.80" height="196.00" rx="0" fill="#e6eaef" />
<rect x="362.82" y="131.00" width="0.80" height="196.00" rx="0" fill="#e6eaef" />
<rect x="368.83" y="131.00" width="1.00" height="196.00" rx="0" fill="#c9c9c9" />
<rect x="375.04" y="131.00" width="0.80" height="196.00" rx="0" fill="#e6eaef" />
<rect x="381.14" y="131.00" width="0.80" height="196.00" rx="0" fill="#e6eaef" />
<rect x="387.25" y="131.00" width="0.80" height="196.00" rx="0" fill="#e6eaef" />
<rect x="393.35" y="131.00" width="0.80" height="196.00" rx="0" fill="#e6eaef" />
<rect x="399.36" y="131.00" width="1.00" height="196.00" rx="0" fill="#c9c9c9" />
<rect x="405.57" y="131.00" width="0.80" height="196.00" rx="0" fill="#e6eaef" />
<rect x="411.67" y="131.00" width="0.80" height="196.00" rx="0" fill="#e6eaef" />
<rect x="417.78" y="131.00" width="0.80" height="196.00" rx="0" fill="#e6eaef" />
<rect x="423.88" y="131.00" width="0.80" height="196.00" rx="0" fill="#e6eaef" />
<rect x="429.89" y="131.00" width="1.00" height="196.00" rx="0" fill="#c9c9c9" />
<rect x="436.10" y="131.00" width="0.80" height="196.00" rx="0" fill="#e6eaef" />
<rect x="442.20" y="131.00" width="0.80" height="196.00" rx="0" fill="#e6eaef" />
<rect x="448.31" y="131.00" width="0.80" height="196.00" rx="0" fill="#e6eaef" />
<rect x="454.41" y="131.00" width="0.80" height="196.00" rx="0" fill="#e6eaef" />
<rect x="460.42" y="131.00" width="1.00" height="196.00" rx="0" fill="#c9c9c9" />
<rect x="466.63" y="131.00" width="0.80" height="196.00" rx="0" fill="#e6eaef" />
<rect x="472.73" y="131.00" width="0.80" height="196.00" rx="0" fill="#e6eaef" />
<rect x="478.84" y="131.00" width="0.80" height="196.00" rx="0" fill="#e6eaef" />
<rect x="484.94" y="131.00" width="0.80" height="196.00" rx="0" fill="#e6eaef" />
<rect x="490.95" y="131.00" width="1.00" height="196.00" rx="0" fill="#c9c9c9" />
<rect x="497.16" y="131.00" width="0.80" height="196.00" rx="0" fill="#e6eaef" />
<rect x="503.26" y="131.00" width="0.80" height="196.00" rx="0" fill="#e6eaef" />
<rect x="509.37" y="131.00" width="0.80" height="196.00" rx="0" fill="#e6eaef" />
<rect x="515.47" y="131.00" width="0.80" height="196.00" rx="0" fill="#e6eaef" />
<rect x="521.48" y="131.00" width="1.00" height="196.00" rx="0" fill="#c9c9c9" />
<rect x="527.69" y="131.00" width="0.80" height="196.00" rx="0" fill="#e6eaef" />
<rect x="533.79" y="131.00" width="0.80" height="196.00" rx="0" fill="#e6eaef" />
<rect x="539.90" y="131.00" width="0.80" height="196.00" rx="0" fill="#e6eaef" />
<rect x="546.00" y="131.00" width="0.80" height="196.00" rx="0" fill="#e6eaef" />
<rect x="552.01" y="131.00" width="1.00" height="196.00" rx="0" fill="#c9c9c9" />
<rect x="558.22" y="131.00" width="0.80" height="196.00" rx="0" fill="#e6eaef" />
<rect x="564.32" y="131.00" width="0.80" height="196.00" rx="0" fill="#e6eaef" />
<rect x="570.43" y="131.00" width="0.80" height="196.00" rx="0" fill="#e6eaef" />
<rect x="576.53" y="131.00" width="0.80" height="196.00" rx="0" fill="#e6eaef" />
<rect x="582.54" y="131.00" width="1.00" height="196.00" rx="0" fill="#c9c9c9" />
<rect x="588.75" y="131.00" width="0.80" height="196.00" rx="0" fill="#e6eaef" />
<rect x="594.85" y="131.00" width="0.80" height="196.00" rx="0" fill="#e6eaef" />
<rect x="600.96" y="131.00" width="0.80" height="196.00" rx="0" fill="#e6eaef" />
<rect x="607.06" y="131.00" width="0.80" height="196.00" rx="0" fill="#e6eaef" />
<rect x="613.07" y="131.00" width="1.00" height="196.00" rx="0" fill="#c9c9c9" />
<rect x="619.28" y="131.00" width="0.80" height="196.00" rx="0" fill="#e6eaef" />
<rect x="625.38" y="131.00" width="0.80" height="196.00" rx="0" fill="#e6eaef" />
<rect x="631.49" y="131.00" width="0.80" height="196.00" rx="0" fill="#e6eaef" />
<rect x="637.59" y="131.00" width="0.80" height="196.00" rx="0" fill="#e6eaef" />
<rect x="643.60" y="131.00" width="1.00" height="196.00" rx="0" fill="#c9c9c9" />
<rect x="649.81" y="131.00" width="0.80" height="196.00" rx="0" fill="#e6eaef" />
<rect x="655.91" y="131.00" width="0.80" height="196.00" rx="0" fill="#e6eaef" />
<rect x="662.02" y="131.00" width="0.80" height="196.00" rx="0" fill="#e6eaef" />
<rect x="668.12" y="131.00" width="0.80" height="196.00" rx="0" fill="#e6eaef" />
<rect x="674.13" y="131.00" width="1.00" height="196.00" rx="0" fill="#c9c9c9" />
<rect x="680.34" y="131.00" width="0.80" height="196.00" rx="0" fill="#e6eaef" />
<rect x="686.44" y="131.00" width="0.80" height="196.00" rx="0" fill="#e6eaef" />
<rect x="692.55" y="131.00" width="0.80" height="196.00" rx="0" fill="#e6eaef" />
<rect x="698.65" y="131.00" width="0.80" height="196.00" rx="0" fill="#e6eaef" />
<rect x="704.66" y="131.00" width="1.00" height="196.00" rx="0" fill="#c9c9c9" />
<rect x="710.87" y="131.00" width="0.80" height="196.00" rx="0" fill="#e6eaef" />
<rect x="716.97" y="131.00" width="0.80" height="196.00" rx="0" fill="#e6eaef" />
<rect x="723.08" y="131.00" width="0.80" height="196.00" rx="0" fill="#e6eaef" />
<rect x="729.18" y="131.00" width="0.80" height="196.00" rx="0" fill="#e6eaef" />
<rect x="735.19" y="131.00" width="1.00" height="196.00" rx="0" fill="#c9c9c9" />
<rect x="741.40" y="131.00" width="0.80" height="196.00" rx="0" fill="#e6eaef" />
<rect x="747.50" y="131.00" width="0.80" height="196.00" rx="0" fill="#e6eaef" />
<rect x="753.61" y="131.00" width="0.80" height="196.00" rx="0" fill="#e6eaef" />
<rect x="759.71" y="131.00" width="0.80" height="196.00" rx="0" fill="#e6eaef" />
<rect x="765.72" y="131.00" width="1.00" height="196.00" rx="0" fill="#c9c9c9" />
<rect x="771.93" y="131.00" width="0.80" height="196.00" rx="0" fill="#e6eaef" />
<rect x="778.03" y="131.00" width="0.80" height="196.00" rx="0" fill="#e6eaef" />
<rect x="784.14" y="131.00" width="0.80" height="196.00" rx="0" fill="#e6eaef" />
<rect x="790.24" y="131.00" width="0.80" height="196.00" rx="0" fill="#e6eaef" />
<rect x="796.25" y="131.00" width="1.00" height="196.00" rx="0" fill="#c9c9c9" />
<rect x="802.46" y="131.00" width="0.80" height="196.00" rx="0" fill="#e6eaef" />
<rect x="808.56" y="131.00" width="0.80" height="196.00" rx="0" fill="#e6eaef" />
<rect x="814.67" y="131.00" width="0.80" height="196.00" rx="0" fill="#e6eaef" />
<rect x="820.77" y="131.00" width="0.80" height="196.00" rx="0" fill="#e6eaef" />
<rect x="826.78" y="131.00" width="1.00" height="196.00" rx="0" fill="#c9c9c9" />
<rect x="832.99" y="131.00" width="0.80" height="196.00" rx="0" fill="#e6eaef" />
<rect x="839.09" y="131.00" width="0.80" height="196.00" rx="0" fill="#e6eaef" />
<rect x="845.20" y="131.00" width="0.80" height="196.00" rx="0" fill="#e6eaef" />
<rect x="851.30" y="131.00" width="0.80" height="196.00" rx="0" fill="#e6eaef" />
<rect x="857.31" y="131.00" width="1.00" height="196.00" rx="0" fill="#c9c9c9" />
<rect x="863.52" y="131.00" width="0.80" height="196.00" rx="0" fill="#e6eaef" />
<rect x="869.62" y="131.00" width="0.80" height="196.00" rx="0" fill="#e6eaef" />
<rect x="875.73" y="131.00" width="0.80" height="196.00" rx="0" fill="#e6eaef" />
<rect x="881.83" y="131.00" width="0.80" height="196.00" rx="0" fill="#e6eaef" />
<rect x="887.84" y="131.00" width="1.00" height="196.00" rx="0" fill="#c9c9c9" />
<rect x="894.05" y="131.00" width="0.80" height="196.00" rx="0" fill="#e6eaef" />
<rect x="900.15" y="131.00" width="0.80" height="196.00" rx="0" fill="#e6eaef" />
<rect x="906.26" y="131.00" width="0.80" height="196.00" rx="0" fill="#e6eaef" />
<rect x="912.36" y="131.00" width="0.80" height="196.00" rx="0" fill="#e6eaef" />
<rect x="918.37" y="131.00" width="1.00" height="196.00" rx="0" fill="#c9c9c9" />
<rect x="924.58" y="131.00" width="0.80" height="196.00" rx="0" fill="#e6eaef" />
<rect x="930.68" y="131.00" width="0.80" height="196.00" rx="0" fill="#e6eaef" />
<rect x="936.79" y="131.00" width="0.80" height="196.00" rx="0" fill="#e6eaef" />
<rect x="942.89" y="131.00" width="0.80" height="196.00" rx="0" fill="#e6eaef" />
<rect x="948.90" y="131.00" width="1.00" height="196.00" rx="0" fill="#c9c9c9" />
<rect x="955.11" y="131.00" width="0.80" height="196.00" rx="0" fill="#e6eaef" />
<rect x="961.21" y="131.00" width="0.80" height="196.00" rx="0" fill="#e6eaef" />
<rect x="278.00" y="136.48" width="688.70" height="0.80" rx="0" fill="#e6eaef" />
<rect x="278.00" y="142.58" width="688.70" height="0.80" rx="0" fill="#e6eaef" />
<rect x="278.00" y="148.69" width="688.70" height="0.80" rx="0" fill="#e6eaef" />
<rect x="278.00" y="154.79" width="688.70" height="0.80" rx="0" fill="#e6eaef" />
<rect x="278.00" y="160.80" width="688.70" height="1.00" rx="0" fill="#c9c9c9" />
<rect x="278.00" y="167.01" width="688.70" height="0.80" rx="0" fill="#e6eaef" />
<rect x="278.00" y="173.11" width="688.70" height="0.80" rx="0" fill="#e6eaef" />
<rect x="278.00" y="179.22" width="688.70" height="0.80" rx="0" fill="#e6eaef" />
<rect x="278.00" y="185.32" width="688.70" height="0.80" rx="0" fill="#e6eaef" />
<rect x="278.00" y="191.33" width="688.70" height="1.00" rx="0" fill="#c9c9c9" />
<rect x="278.00" y="197.54" width="688.70" height="0.80" rx="0" fill="#e6eaef" />
<rect x="278.00" y="203.64" width="688.70" height="0.80" rx="0" fill="#e6eaef" />
<rect x="278.00" y="209.75" width="688.70" height="0.80" rx="0" fill="#e6eaef" />
<rect x="278.00" y="215.85" width="688.70" height="0.80" rx="0" fill="#e6eaef" />
<rect x="278.00" y="221.86" width="688.70" height="1.00" rx="0" fill="#c9c9c9" />
<rect x="278.00" y="228.07" width="688.70" height="0.80" rx="0" fill="#e6eaef" />
<rect x="278.00" y="234.17" width="688.70" height="0.80" rx="0" fill="#e6eaef" />
<rect x="278.00" y="240.28" width="688.70" height="0.80" rx="0" fill="#e6eaef" />
<rect x="278.00" y="246.38" width="688.70" height="0.80" rx="0" fill="#e6eaef" />
<rect x="278.00" y="252.39" width="688.70" height="1.00" rx="0" fill="#c9c9c9" />
<rect x="278.00" y="258.60" width="688.70" height="0.80" rx="0" fill="#e6eaef" />
<rect x="278.00" y="264.70" width="688.70" height="0.80" rx="0" fill="#e6eaef" />
<rect x="278.00" y="270.81" width="688.70" height="0.80" rx="0" fill="#e6eaef" />
<rect x="278.00" y="276.91" width="688.70" height="0.80" rx="0" fill="#e6eaef" />
<rect x="278.00" y="282.92" width="688.70" height="1.00" rx="0" fill="#c9c9c9" />
<rect x="278.00" y="289.13" width="688.70" height="0.80" rx="0" fill="#e6eaef" />
<rect x="278.00" y="295.23" width="688.70" height="0.80" rx="0" fill="#e6eaef" />
<rect x="278.00" y="301.34" width="688.70" height="0.80" rx="0" fill="#e6eaef" />
<rect x="278.00" y="307.44" width="688.70" height="0.80" rx="0" fill="#e6eaef" />
<rect x="278.00" y="313.45" width="688.70" height="1.00" rx="0" fill="#c9c9c9" />
<rect x="278.00" y="319.66" width="688.70" height="0.80" rx="0" fill="#e6eaef" />
<rect x="278.00" y="325.76" width="688.70" height="0.80" rx="0" fill="#e6eaef" />
<rect x="272.00" y="120.80" width="699.70" height="1.80" rx="0" fill="#2f78e4" />
<rect x="272.00" y="122.60" width="694.70" height="8.40" rx="0" fill="#ffffff" />
<rect x="272.00" y="128.80" width="694.70" height="2.20" rx="0" fill="#e4e4e4" />
<rect x="278.00" y="130.20" width="688.70" height="0.90" rx="0" fill="#b9b9b9" />
<text x="279.14" y="127.79" font-size="6" fill="#3a3a3a" stroke="#3a3a3a" stroke-width="0.08" text-anchor="start" >-2</text>
<rect x="283.55" y="128.00" width="0.60" height="3.00" rx="0" fill="#555" />
<rect x="289.65" y="128.00" width="0.60" height="3.00" rx="0" fill="#555" />
<rect x="295.76" y="128.00" width="0.60" height="3.00" rx="0" fill="#555" />
<rect x="301.86" y="128.00" width="0.60" height="3.00" rx="0" fill="#555" />
<rect x="307.72" y="122.80" width="1.10" height="8.20" rx="0" fill="#333" />
<text x="309.67" y="127.79" font-size="6" fill="#3a3a3a" stroke="#3a3a3a" stroke-width="0.08" text-anchor="start" >-1</text>
<rect x="314.08" y="128.00" width="0.60" height="3.00" rx="0" fill="#555" />
<rect x="320.18" y="128.00" width="0.60" height="3.00" rx="0" fill="#555" />
<rect x="326.29" y="128.00" width="0.60" height="3.00" rx="0" fill="#555" />
<rect x="332.39" y="128.00" width="0.60" height="3.00" rx="0" fill="#555" />
<rect x="338.25" y="122.80" width="1.10" height="8.20" rx="0" fill="#333" />
<text x="340.20" y="127.79" font-size="6" fill="#3a3a3a" stroke="#3a3a3a" stroke-width="0.08" text-anchor="start" >0m</text>
<rect x="344.61" y="128.00" width="0.60" height="3.00" rx="0" fill="#555" />
<rect x="350.71" y="128.00" width="0.60" height="3.00" rx="0" fill="#555" />
<rect x="356.82" y="128.00" width="0.60" height="3.00" rx="0" fill="#555" />
<rect x="362.92" y="128.00" width="0.60" height="3.00" rx="0" fill="#555" />
<rect x="368.78" y="122.80" width="1.10" height="8.20" rx="0" fill="#333" />
<text x="370.73" y="127.79" font-size="6" fill="#3a3a3a" stroke="#3a3a3a" stroke-width="0.08" text-anchor="start" >1</text>
<rect x="375.14" y="128.00" width="0.60" height="3.00" rx="0" fill="#555" />
<rect x="381.24" y="128.00" width="0.60" height="3.00" rx="0" fill="#555" />
<rect x="387.35" y="128.00" width="0.60" height="3.00" rx="0" fill="#555" />
<rect x="393.45" y="128.00" width="0.60" height="3.00" rx="0" fill="#555" />
<rect x="399.31" y="122.80" width="1.10" height="8.20" rx="0" fill="#333" />
<text x="401.26" y="127.79" font-size="6" fill="#3a3a3a" stroke="#3a3a3a" stroke-width="0.08" text-anchor="start" >2</text>
<rect x="405.67" y="128.00" width="0.60" height="3.00" rx="0" fill="#555" />
<rect x="411.77" y="128.00" width="0.60" height="3.00" rx="0" fill="#555" />
<rect x="417.88" y="128.00" width="0.60" height="3.00" rx="0" fill="#555" />
<rect x="423.98" y="128.00" width="0.60" height="3.00" rx="0" fill="#555" />
<rect x="429.84" y="122.80" width="1.10" height="8.20" rx="0" fill="#333" />
<text x="431.79" y="127.79" font-size="6" fill="#3a3a3a" stroke="#3a3a3a" stroke-width="0.08" text-anchor="start" >3</text>
<rect x="436.20" y="128.00" width="0.60" height="3.00" rx="0" fill="#555" />
<rect x="442.30" y="128.00" width="0.60" height="3.00" rx="0" fill="#555" />
<rect x="448.41" y="128.00" width="0.60" height="3.00" rx="0" fill="#555" />
<rect x="454.51" y="128.00" width="0.60" height="3.00" rx="0" fill="#555" />
<rect x="460.37" y="122.80" width="1.10" height="8.20" rx="0" fill="#333" />
<text x="462.32" y="127.79" font-size="6" fill="#3a3a3a" stroke="#3a3a3a" stroke-width="0.08" text-anchor="start" >4</text>
<rect x="466.73" y="128.00" width="0.60" height="3.00" rx="0" fill="#555" />
<rect x="472.83" y="128.00" width="0.60" height="3.00" rx="0" fill="#555" />
<rect x="478.94" y="128.00" width="0.60" height="3.00" rx="0" fill="#555" />
<rect x="485.04" y="128.00" width="0.60" height="3.00" rx="0" fill="#555" />
<rect x="490.90" y="122.80" width="1.10" height="8.20" rx="0" fill="#333" />
<text x="492.85" y="127.79" font-size="6" fill="#3a3a3a" stroke="#3a3a3a" stroke-width="0.08" text-anchor="start" >5</text>
<rect x="497.26" y="128.00" width="0.60" height="3.00" rx="0" fill="#555" />
<rect x="503.36" y="128.00" width="0.60" height="3.00" rx="0" fill="#555" />
<rect x="509.47" y="128.00" width="0.60" height="3.00" rx="0" fill="#555" />
<rect x="515.57" y="128.00" width="0.60" height="3.00" rx="0" fill="#555" />
<rect x="521.43" y="122.80" width="1.10" height="8.20" rx="0" fill="#333" />
<text x="523.38" y="127.79" font-size="6" fill="#3a3a3a" stroke="#3a3a3a" stroke-width="0.08" text-anchor="start" >6</text>
<rect x="527.79" y="128.00" width="0.60" height="3.00" rx="0" fill="#555" />
<rect x="533.89" y="128.00" width="0.60" height="3.00" rx="0" fill="#555" />
<rect x="540.00" y="128.00" width="0.60" height="3.00" rx="0" fill="#555" />
<rect x="546.10" y="128.00" width="0.60" height="3.00" rx="0" fill="#555" />
<rect x="551.96" y="122.80" width="1.10" height="8.20" rx="0" fill="#333" />
<text x="553.91" y="127.79" font-size="6" fill="#3a3a3a" stroke="#3a3a3a" stroke-width="0.08" text-anchor="start" >7</text>
<rect x="558.32" y="128.00" width="0.60" height="3.00" rx="0" fill="#555" />
<rect x="564.42" y="128.00" width="0.60" height="3.00" rx="0" fill="#555" />
<rect x="570.53" y="128.00" width="0.60" height="3.00" rx="0" fill="#555" />
<rect x="576.63" y="128.00" width="0.60" height="3.00" rx="0" fill="#555" />
<rect x="582.49" y="122.80" width="1.10" height="8.20" rx="0" fill="#333" />
<text x="584.44" y="127.79" font-size="6" fill="#3a3a3a" stroke="#3a3a3a" stroke-width="0.08" text-anchor="start" >8</text>
<rect x="588.85" y="128.00" width="0.60" height="3.00" rx="0" fill="#555" />
<rect x="594.95" y="128.00" width="0.60" height="3.00" rx="0" fill="#555" />
<rect x="601.06" y="128.00" width="0.60" height="3.00" rx="0" fill="#555" />
<rect x="607.16" y="128.00" width="0.60" height="3.00" rx="0" fill="#555" />
<rect x="613.02" y="122.80" width="1.10" height="8.20" rx="0" fill="#333" />
<text x="614.97" y="127.79" font-size="6" fill="#3a3a3a" stroke="#3a3a3a" stroke-width="0.08" text-anchor="start" >9</text>
<rect x="619.38" y="128.00" width="0.60" height="3.00" rx="0" fill="#555" />
<rect x="625.48" y="128.00" width="0.60" height="3.00" rx="0" fill="#555" />
<rect x="631.59" y="128.00" width="0.60" height="3.00" rx="0" fill="#555" />
<rect x="637.69" y="128.00" width="0.60" height="3.00" rx="0" fill="#555" />
<rect x="643.55" y="122.80" width="1.10" height="8.20" rx="0" fill="#333" />
<text x="645.50" y="127.79" font-size="6" fill="#3a3a3a" stroke="#3a3a3a" stroke-width="0.08" text-anchor="start" >10</text>
<rect x="649.91" y="128.00" width="0.60" height="3.00" rx="0" fill="#555" />
<rect x="656.01" y="128.00" width="0.60" height="3.00" rx="0" fill="#555" />
<rect x="662.12" y="128.00" width="0.60" height="3.00" rx="0" fill="#555" />
<rect x="668.22" y="128.00" width="0.60" height="3.00" rx="0" fill="#555" />
<rect x="674.08" y="122.80" width="1.10" height="8.20" rx="0" fill="#333" />
<text x="676.03" y="127.79" font-size="6" fill="#3a3a3a" stroke="#3a3a3a" stroke-width="0.08" text-anchor="start" >11</text>
<rect x="680.44" y="128.00" width="0.60" height="3.00" rx="0" fill="#555" />
<rect x="686.54" y="128.00" width="0.60" height="3.00" rx="0" fill="#555" />
<rect x="692.65" y="128.00" width="0.60" height="3.00" rx="0" fill="#555" />
<rect x="698.75" y="128.00" width="0.60" height="3.00" rx="0" fill="#555" />
<rect x="704.61" y="122.80" width="1.10" height="8.20" rx="0" fill="#333" />
<text x="706.56" y="127.79" font-size="6" fill="#3a3a3a" stroke="#3a3a3a" stroke-width="0.08" text-anchor="start" >12</text>
<rect x="710.97" y="128.00" width="0.60" height="3.00" rx="0" fill="#555" />
<rect x="717.07" y="128.00" width="0.60" height="3.00" rx="0" fill="#555" />
<rect x="723.18" y="128.00" width="0.60" height="3.00" rx="0" fill="#555" />
<rect x="729.28" y="128.00" width="0.60" height="3.00" rx="0" fill="#555" />
<rect x="735.14" y="122.80" width="1.10" height="8.20" rx="0" fill="#333" />
<text x="737.09" y="127.79" font-size="6" fill="#3a3a3a" stroke="#3a3a3a" stroke-width="0.08" text-anchor="start" >13</text>
<rect x="741.50" y="128.00" width="0.60" height="3.00" rx="0" fill="#555" />
<rect x="747.60" y="128.00" width="0.60" height="3.00" rx="0" fill="#555" />
<rect x="753.71" y="128.00" width="0.60" height="3.00" rx="0" fill="#555" />
<rect x="759.81" y="128.00" width="0.60" height="3.00" rx="0" fill="#555" />
<rect x="765.67" y="122.80" width="1.10" height="8.20" rx="0" fill="#333" />
<text x="767.62" y="127.79" font-size="6" fill="#3a3a3a" stroke="#3a3a3a" stroke-width="0.08" text-anchor="start" >14</text>
<rect x="772.03" y="128.00" width="0.60" height="3.00" rx="0" fill="#555" />
<rect x="778.13" y="128.00" width="0.60" height="3.00" rx="0" fill="#555" />
<rect x="784.24" y="128.00" width="0.60" height="3.00" rx="0" fill="#555" />
<rect x="790.34" y="128.00" width="0.60" height="3.00" rx="0" fill="#555" />
<rect x="796.20" y="122.80" width="1.10" height="8.20" rx="0" fill="#333" />
<text x="798.15" y="127.79" font-size="6" fill="#3a3a3a" stroke="#3a3a3a" stroke-width="0.08" text-anchor="start" >15</text>
<rect x="802.56" y="128.00" width="0.60" height="3.00" rx="0" fill="#555" />
<rect x="808.66" y="128.00" width="0.60" height="3.00" rx="0" fill="#555" />
<rect x="814.77" y="128.00" width="0.60" height="3.00" rx="0" fill="#555" />
<rect x="820.87" y="128.00" width="0.60" height="3.00" rx="0" fill="#555" />
<rect x="826.73" y="122.80" width="1.10" height="8.20" rx="0" fill="#333" />
<text x="828.68" y="127.79" font-size="6" fill="#3a3a3a" stroke="#3a3a3a" stroke-width="0.08" text-anchor="start" >16</text>
<rect x="833.09" y="128.00" width="0.60" height="3.00" rx="0" fill="#555" />
<rect x="839.19" y="128.00" width="0.60" height="3.00" rx="0" fill="#555" />
<rect x="845.30" y="128.00" width="0.60" height="3.00" rx="0" fill="#555" />
<rect x="851.40" y="128.00" width="0.60" height="3.00" rx="0" fill="#555" />
<rect x="857.26" y="122.80" width="1.10" height="8.20" rx="0" fill="#333" />
<text x="859.21" y="127.79" font-size="6" fill="#3a3a3a" stroke="#3a3a3a" stroke-width="0.08" text-anchor="start" >17</text>
<rect x="863.62" y="128.00" width="0.60" height="3.00" rx="0" fill="#555" />
<rect x="869.72" y="128.00" width="0.60" height="3.00" rx="0" fill="#555" />
<rect x="875.83" y="128.00" width="0.60" height="3.00" rx="0" fill="#555" />
<rect x="881.93" y="128.00" width="0.60" height="3.00" rx="0" fill="#555" />
<rect x="887.79" y="122.80" width="1.10" height="8.20" rx="0" fill="#333" />
<text x="889.74" y="127.79" font-size="6" fill="#3a3a3a" stroke="#3a3a3a" stroke-width="0.08" text-anchor="start" >18</text>
<rect x="894.15" y="128.00" width="0.60" height="3.00" rx="0" fill="#555" />
<rect x="900.25" y="128.00" width="0.60" height="3.00" rx="0" fill="#555" />
<rect x="906.36" y="128.00" width="0.60" height="3.00" rx="0" fill="#555" />
<rect x="912.46" y="128.00" width="0.60" height="3.00" rx="0" fill="#555" />
<rect x="918.32" y="122.80" width="1.10" height="8.20" rx="0" fill="#333" />
<text x="920.27" y="127.79" font-size="6" fill="#3a3a3a" stroke="#3a3a3a" stroke-width="0.08" text-anchor="start" >19</text>
<rect x="924.68" y="128.00" width="0.60" height="3.00" rx="0" fill="#555" />
<rect x="930.78" y="128.00" width="0.60" height="3.00" rx="0" fill="#555" />
<rect x="936.89" y="128.00" width="0.60" height="3.00" rx="0" fill="#555" />
<rect x="942.99" y="128.00" width="0.60" height="3.00" rx="0" fill="#555" />
<rect x="948.85" y="122.80" width="1.10" height="8.20" rx="0" fill="#333" />
<text x="950.80" y="127.79" font-size="6" fill="#3a3a3a" stroke="#3a3a3a" stroke-width="0.08" text-anchor="start" >20</text>
<rect x="955.21" y="128.00" width="0.60" height="3.00" rx="0" fill="#555" />
<rect x="961.31" y="128.00" width="0.60" height="3.00" rx="0" fill="#555" />
<rect x="272.00" y="131.00" width="6.00" height="196.00" rx="0" fill="#ffffff" />
<rect x="277.30" y="131.00" width="0.80" height="196.00" rx="0" fill="#b9b9b9" />
<rect x="275.20" y="136.58" width="2.80" height="0.60" rx="0" fill="#555" />
<rect x="275.20" y="142.68" width="2.80" height="0.60" rx="0" fill="#555" />
<rect x="275.20" y="148.79" width="2.80" height="0.60" rx="0" fill="#555" />
<rect x="275.20" y="154.89" width="2.80" height="0.60" rx="0" fill="#555" />
<rect x="272.00" y="160.75" width="6.00" height="1.10" rx="0" fill="#333" />
<text x="0" y="0" font-size="5.2" fill="#3a3a3a" transform="translate(275.4,163.30) rotate(90)">4</text>
<rect x="275.20" y="167.11" width="2.80" height="0.60" rx="0" fill="#555" />
<rect x="275.20" y="173.21" width="2.80" height="0.60" rx="0" fill="#555" />
<rect x="275.20" y="179.32" width="2.80" height="0.60" rx="0" fill="#555" />
<rect x="275.20" y="185.42" width="2.80" height="0.60" rx="0" fill="#555" />
<rect x="272.00" y="191.28" width="6.00" height="1.10" rx="0" fill="#333" />
<text x="0" y="0" font-size="5.2" fill="#3a3a3a" transform="translate(275.4,193.83) rotate(90)">3</text>
<rect x="275.20" y="197.64" width="2.80" height="0.60" rx="0" fill="#555" />
<rect x="275.20" y="203.74" width="2.80" height="0.60" rx="0" fill="#555" />
<rect x="275.20" y="209.85" width="2.80" height="0.60" rx="0" fill="#555" />
<rect x="275.20" y="215.95" width="2.80" height="0.60" rx="0" fill="#555" />
<rect x="272.00" y="221.81" width="6.00" height="1.10" rx="0" fill="#333" />
<text x="0" y="0" font-size="5.2" fill="#3a3a3a" transform="translate(275.4,224.36) rotate(90)">2</text>
<rect x="275.20" y="228.17" width="2.80" height="0.60" rx="0" fill="#555" />
<rect x="275.20" y="234.27" width="2.80" height="0.60" rx="0" fill="#555" />
<rect x="275.20" y="240.38" width="2.80" height="0.60" rx="0" fill="#555" />
<rect x="275.20" y="246.48" width="2.80" height="0.60" rx="0" fill="#555" />
<rect x="272.00" y="252.34" width="6.00" height="1.10" rx="0" fill="#333" />
<text x="0" y="0" font-size="5.2" fill="#3a3a3a" transform="translate(275.4,254.89) rotate(90)">1</text>
<rect x="275.20" y="258.70" width="2.80" height="0.60" rx="0" fill="#555" />
<rect x="275.20" y="264.80" width="2.80" height="0.60" rx="0" fill="#555" />
<rect x="275.20" y="270.91" width="2.80" height="0.60" rx="0" fill="#555" />
<rect x="275.20" y="277.01" width="2.80" height="0.60" rx="0" fill="#555" />
<rect x="272.00" y="282.87" width="6.00" height="1.10" rx="0" fill="#333" />
<text x="0" y="0" font-size="5.2" fill="#3a3a3a" transform="translate(275.4,285.42) rotate(90)">0</text>
<rect x="275.20" y="289.23" width="2.80" height="0.60" rx="0" fill="#555" />
<rect x="275.20" y="295.33" width="2.80" height="0.60" rx="0" fill="#555" />
<rect x="275.20" y="301.44" width="2.80" height="0.60" rx="0" fill="#555" />
<rect x="275.20" y="307.54" width="2.80" height="0.60" rx="0" fill="#555" />
<rect x="272.00" y="313.40" width="6.00" height="1.10" rx="0" fill="#333" />
<text x="0" y="0" font-size="5.2" fill="#3a3a3a" transform="translate(275.4,315.95) rotate(90)">-1</text>
<rect x="275.20" y="319.76" width="2.80" height="0.60" rx="0" fill="#555" />
<rect x="275.20" y="325.86" width="2.80" height="0.60" rx="0" fill="#555" />
<rect x="386.60" y="122.60" width="1.60" height="8.40" rx="0" fill="#4d8ff0" />
<rect x="271.50" y="260.80" width="6.50" height="1.20" rx="0" fill="#4d8ff0" />
<rect x="272.4" y="124" width="5.6" height="6.6" fill="#8a8a8a"/><rect x="273.2" y="126.4" width="4" height="3.6" fill="#cfcfcf"/>
<rect x="966.70" y="122.60" width="5.00" height="204.40" rx="0" fill="#f6f8fb" />
<rect x="968.40" y="150.80" width="3.30" height="118.60" rx="1.6" fill="#c6c6c6" />
<path d="M293.1 130.6 A15.5 14.6 0 0 0 324.1 130.6" fill="none" stroke="#777" stroke-width="0.65"/>
<rect x="308.20" y="131.00" width="0.60" height="19.00" rx="0" fill="#aaa" />
<line x1="303.80" y1="145.00" x2="313.70" y2="145.00" stroke="#999" stroke-width="0.5" />
<path d="M306.4 131.2 L303.8 144.7 L308.6 140.4 L313.7 144.7 L310.8 131.2" fill="none" stroke="#2a2a2a" stroke-width="1.15" stroke-linecap="round" stroke-linejoin="round" />
<defs><pattern id="wood" patternUnits="userSpaceOnUse" width="36" height="62" x="433" y="132"><rect width="36" height="62" fill="#d3b891"/><rect x="0" y="0" width="9" height="40" fill="#d0b48e"/><rect x="18" y="22" width="9" height="40" fill="#d6bb96"/><rect x="27" y="0" width="9" height="25" fill="#cfb38c"/><rect x="8.7" y="0" width="0.4" height="62" fill="#cbae83"/><rect x="17.7" y="0" width="0.4" height="62" fill="#ccaf84"/><rect x="26.7" y="0" width="0.4" height="62" fill="#cbae83"/><rect x="0" y="40" width="9" height="0.4" fill="#c9ab80"/><rect x="18" y="22" width="9" height="0.4" fill="#c9ab80"/><rect x="27" y="25" width="9" height="0.4" fill="#c9ab80"/><rect x="9" y="50" width="9" height="0.4" fill="#c9ab80"/></pattern><pattern id="hatch" patternUnits="userSpaceOnUse" width="3" height="3"><rect width="3" height="3" fill="#f4f4f4"/><path d="M0 3 L3 0" stroke="#777" stroke-width="0.6"/></pattern><pattern id="btile" patternUnits="userSpaceOnUse" width="15" height="15" x="737.6" y="131.8"><rect width="15" height="15" fill="#a9a9a9"/><rect width="15" height="0.5" fill="#b6b6b6"/><rect width="0.5" height="15" fill="#b6b6b6"/></pattern></defs>
<path d="M433.8 132 H734.9 V253.4 H795.6 V327 H433.8 Z" fill="url(#wood)"/>
<rect x="429.00" y="131.20" width="4.80" height="195.80" rx="0" fill="url(#hatch)" />
<rect x="428.80" y="131.20" width="0.80" height="195.80" rx="0" fill="#333" />
<rect x="433.20" y="131.20" width="0.80" height="195.80" rx="0" fill="#333" />
<rect x="429.00" y="131.00" width="400.00" height="1.60" rx="0" fill="#2a2a2a" />
<rect x="600.50" y="131.00" width="28.50" height="3.20" rx="0" fill="#f7f7f7" />
<rect x="600.50" y="133.60" width="28.50" height="0.60" rx="0" fill="#888" />
<rect x="426.20" y="236.50" width="7.10" height="75.70" rx="0" fill="#fbfbfb" />
<rect x="426.4" y="236.7" width="6.8" height="75.3" fill="none" stroke="#777" stroke-width="0.5"/>
<rect x="737.60" y="131.80" width="87.70" height="118.60" rx="0" fill="url(#btile)" />
<rect x="734.90" y="131.80" width="2.70" height="121.60" rx="0" fill="url(#hatch)" />
<rect x="734.60" y="131.80" width="0.70" height="121.60" rx="0" fill="#333" />
<rect x="737.20" y="131.80" width="0.70" height="118.60" rx="0" fill="#333" />
<rect x="734.90" y="250.40" width="93.40" height="3.00" rx="0" fill="url(#hatch)" />
<rect x="734.90" y="253.00" width="93.40" height="0.80" rx="0" fill="#333" />
<rect x="737.60" y="250.10" width="87.70" height="0.70" rx="0" fill="#333" />
<rect x="825.30" y="131.80" width="3.00" height="121.60" rx="0" fill="url(#hatch)" />
<rect x="825.00" y="131.80" width="0.70" height="119.00" rx="0" fill="#333" />
<rect x="828.00" y="131.80" width="0.70" height="122.00" rx="0" fill="#333" />
<rect x="794.50" y="132.60" width="30.50" height="48.90" rx="0" fill="#fafafa" />
<rect x="806.50" y="152.00" width="9.70" height="9.20" rx="0" fill="#151515" />
<rect x="816.00" y="156.20" width="8.00" height="0.60" rx="0" fill="#333" />
<rect x="822.50" y="152.00" width="1.50" height="9.00" rx="0" fill="#666" />
<ellipse cx="746" cy="147.1" rx="8.2" ry="5.2" fill="#f2f2f2" stroke="#8a8a8a" stroke-width="0.5"/>
<rect x="737.80" y="146.60" width="7.20" height="1.00" rx="0" fill="#222" />
<circle cx="744.8" cy="147.1" r="1.1" fill="#222"/>
<path d="M737.8 163.9 H748 Q753.2 164.5 753.2 169.5 Q753.2 174.6 748 175.2 H737.8 Z" fill="#f2f2f2" stroke="#8a8a8a" stroke-width="0.5"/>
<rect x="738.00" y="174.00" width="3.40" height="8.00" rx="0" fill="#111" />
<rect x="762.50" y="132.60" width="13.50" height="26.80" rx="0" fill="#b8b8b8" />
<path d="M762.5 132.6 V159.4 A26.5 26.8 0 0 0 789 132.6" fill="none" stroke="#333" stroke-width="0.6"/>
<rect x="737.60" y="197.30" width="24.90" height="26.70" rx="0" fill="#b5b5b5" />
<path d="M737.6 197.3 A24.9 26.7 0 0 1 762.5 224" fill="none" stroke="#333" stroke-width="0.6"/><path d="M737.6 197.3 V224 H762.5" fill="none" stroke="#666" stroke-width="0.4"/>
<text x="767.40" y="193.18" font-size="7.35" fill="#2a2a2a" stroke="#2a2a2a" stroke-width="0.15" text-anchor="start" >11.62 m²</text>
<rect x="774.20" y="193.20" width="12.70" height="6.40" rx="0" fill="#d9d9d9" />
<rect x="760.20" y="234.60" width="42.90" height="11.30" rx="0" fill="#8c8c8c" />
<rect x="761.30" y="245.90" width="35.10" height="3.80" rx="0" fill="#a3793b" />
<rect x="803.60" y="234.60" width="21.70" height="15.80" rx="0" fill="#9a7440" />
<rect x="805.00" y="246.00" width="19.00" height="3.60" rx="0" fill="#333" />
<rect x="781.00" y="236.60" width="4.00" height="4.00" rx="0" fill="#dcdcdc" />
<rect x="725.80" y="131.80" width="9.10" height="16.90" rx="0" fill="#2b2b2b" />
<circle cx="730.3" cy="137" r="2.2" fill="#eee"/>
<rect x="725.80" y="148.70" width="9.10" height="27.80" rx="0" fill="#b89a6c" />
<rect x="725.80" y="176.50" width="9.10" height="15.80" rx="0" fill="#2b2b2b" />
<circle cx="727.4" cy="242.5" r="5.6" fill="#141414"/>
<circle cx="743.2" cy="242.5" r="5" fill="#141414"/>
<circle cx="665.4" cy="141.3" r="6.8" fill="#141414"/>
<rect x="795.60" y="253.40" width="4.10" height="73.60" rx="0" fill="url(#hatch)" />
<rect x="795.30" y="253.40" width="0.70" height="73.60" rx="0" fill="#333" />
<rect x="799.30" y="253.40" width="0.70" height="73.60" rx="0" fill="#333" />
<path d="M800 258 L816 258 L800 276 Z" fill="#e9e9e9"/>
<path d="M764.8 282.2 H794.3 V326.5 H717.2 V308 Q717.2 305.6 720 305.6 H764.8 Z" fill="#4b4b4b"/>
<rect x="783.70" y="290.50" width="9.90" height="27.00" rx="0" fill="#b0803c" />
<rect x="783.70" y="297.00" width="9.90" height="0.70" rx="0" fill="#6d5128" />
<rect x="783.70" y="304.00" width="9.90" height="0.70" rx="0" fill="#6d5128" />
<rect x="783.70" y="311.00" width="9.90" height="0.70" rx="0" fill="#6d5128" />
<path d="M770 258 Q765 262 768 270 Q773 274 778 268 Q783 262 790 264 Q794 260 788 254 Q782 254 778 262 Q776 256 770 258 Z M762 280 Q766 272 775 271 Q780 276 790 272 Q792 280 784 282 Q776 283 770 281 Z" fill="#111"/>
<rect x="433.40" y="132.60" width="18.50" height="57.40" rx="0" fill="#2e2e2e" />
<rect x="451.90" y="132.60" width="102.30" height="19.30" rx="0" fill="#8b6a3c" />
<rect x="489.60" y="132.60" width="27.20" height="15.40" rx="0" fill="#161616" />
<rect x="494.00" y="148.00" width="18.00" height="2.20" rx="0" fill="#161616" />
<rect x="541.90" y="132.60" width="11.10" height="11.30" rx="0" fill="#1b1b1b" />
<circle cx="461.5" cy="138" r="1.5" fill="#222"/>
<circle cx="474" cy="136" r="1.5" fill="#222"/>
<circle cx="485" cy="140" r="1.5" fill="#222"/>
<circle cx="521.5" cy="138" r="1.5" fill="#222"/>
<circle cx="530.5" cy="141" r="1.5" fill="#222"/>
<circle cx="535" cy="136" r="1.5" fill="#222"/>
<rect x="529.50" y="136.50" width="2.00" height="7.50" rx="0" fill="#666" />
<rect x="477.00" y="179.00" width="41.70" height="21.50" rx="0" fill="#2b2b2b" />
<rect x="518.70" y="179.00" width="34.80" height="29.00" rx="0" fill="#8d6b3b" />
<rect x="485.30" y="200.50" width="68.20" height="7.50" rx="0" fill="#8d6b3b" />
<path d="M505 183 L511 181 L515 189 L509 191 Z" fill="#b48a4f"/>
<circle cx="534.9" cy="192.6" r="3" fill="#1a1a1a"/><circle cx="534.9" cy="192.6" r="1.3" fill="#c9a060"/>
<rect x="480.00" y="193.00" width="2.00" height="3.00" rx="0" fill="#a07a45" />
<rect x="484.00" y="194.00" width="2.00" height="3.00" rx="0" fill="#a07a45" />
<circle cx="505.8" cy="217.6" r="5" fill="#474747" stroke="#8a8a8a" stroke-width="0.7"/><circle cx="533.6" cy="217" r="5" fill="#474747" stroke="#8a8a8a" stroke-width="0.7"/>
<path d="M498.4 214.6 A7.2 7.2 0 0 0 502.6 225.2 M531 224.4 A7 7 0 0 0 540 223.2" fill="none" stroke="#222" stroke-width="1.3"/>
<rect x="472.30" y="238.30" width="47.40" height="11.50" rx="0" fill="#8d6b3b" />
<rect x="472.30" y="238.30" width="11.50" height="38.10" rx="0" fill="#8d6b3b" />
<rect x="485.50" y="240.00" width="9.50" height="7.50" rx="0" fill="#9a9a9a" />
<rect x="505.00" y="240.00" width="11.00" height="7.50" rx="0" fill="#cfcfcf" />
<rect x="474.50" y="258.00" width="7.50" height="7.00" rx="0" fill="#555" />
<rect x="475.30" y="277.30" width="89.20" height="40.80" rx="0" fill="#979797" />
<path d="M483.5 249.8 H575.2 V294.5 H547.7 V277.8 H483.5 Z" fill="#545454"/>
<rect x="513.40" y="251.00" width="0.80" height="26.80" rx="0" fill="#444" />
<rect x="547.30" y="251.00" width="0.80" height="26.80" rx="0" fill="#444" />
<rect x="503.30" y="288.00" width="33.40" height="18.90" rx="0" fill="#2e2e2e" />
<rect x="529.50" y="288.60" width="6.50" height="17.60" rx="0" fill="#6a6a6a" />
<ellipse cx="515.5" cy="295.5" rx="3.2" ry="2.6" fill="#c8b48a"/>
<circle cx="457.2" cy="327" r="6" fill="#111"/><circle cx="484.7" cy="302.1" r="7.1" fill="#141414"/>
<line x1="456.00" y1="321.00" x2="490.00" y2="294.00" stroke="#333" stroke-width="0.6" />
<rect x="631.20" y="192.10" width="30.50" height="79.30" rx="0" fill="#6e6e6e" />
<rect x="640.50" y="211.00" width="11.00" height="44.00" rx="0" fill="#5f5f5f" />
<rect x="622.00" y="198.00" width="9.20" height="15.00" rx="1" fill="#151515" />
<rect x="661.70" y="198.00" width="10.20" height="15.00" rx="1" fill="#151515" />
<rect x="622.00" y="221.60" width="9.20" height="14.40" rx="1" fill="#151515" />
<rect x="661.70" y="221.60" width="10.20" height="14.40" rx="1" fill="#151515" />
<rect x="622.00" y="247.00" width="9.20" height="15.00" rx="1" fill="#151515" />
<rect x="661.70" y="247.00" width="10.20" height="15.00" rx="1" fill="#151515" />
<path d="M441.6 231.5 Q443.8 235 441.8 239 Q439.2 242 441.6 245 Q444 249 442 253 Q441 256 441.4 258 Q439.6 255 440 251 Q441.6 247 439.4 244 Q437.6 240 440.2 236 Q441.4 233 441.6 231.5 Z" fill="#1c1c1c" stroke="#1c1c1c" stroke-width="0.8"/>
<path d="M441.6 289.5 Q443.8 293 441.8 297 Q439.2 300 441.6 303 Q444 307 442 311 Q441 314 441.4 316 Q439.6 313 440 309 Q441.6 305 439.4 302 Q437.6 298 440.2 294 Q441.4 291 441.6 289.5 Z" fill="#1c1c1c" stroke="#1c1c1c" stroke-width="0.8"/>
<path d="M434 256 H452 A18 18 0 0 1 434 274 A18 18 0 0 1 452 292 H434" fill="none" stroke="#333" stroke-width="0.7"/>
<path d="M638 327 Q640 319 646 317 Q649 322 648 327 Z M649 327 Q652 320 658 318 Q658 324 655 327 Z" fill="#111"/>
<line x1="630.00" y1="327.00" x2="647.00" y2="312.00" stroke="#555" stroke-width="0.5" />
<line x1="647.00" y1="312.00" x2="665.00" y2="327.00" stroke="#555" stroke-width="0.5" />
<rect x="460.42" y="132.60" width="1.00" height="194.20" rx="0" fill="#000" fill-opacity="0.05"/>
<rect x="490.95" y="132.60" width="1.00" height="194.20" rx="0" fill="#000" fill-opacity="0.05"/>
<rect x="521.48" y="132.60" width="1.00" height="194.20" rx="0" fill="#000" fill-opacity="0.05"/>
<rect x="552.01" y="132.60" width="1.00" height="194.20" rx="0" fill="#000" fill-opacity="0.05"/>
<rect x="582.54" y="132.60" width="1.00" height="194.20" rx="0" fill="#000" fill-opacity="0.05"/>
<rect x="613.07" y="132.60" width="1.00" height="194.20" rx="0" fill="#000" fill-opacity="0.05"/>
<rect x="643.60" y="132.60" width="1.00" height="194.20" rx="0" fill="#000" fill-opacity="0.05"/>
<rect x="674.13" y="132.60" width="1.00" height="194.20" rx="0" fill="#000" fill-opacity="0.05"/>
<rect x="704.66" y="132.60" width="1.00" height="194.20" rx="0" fill="#000" fill-opacity="0.05"/>
<rect x="735.19" y="132.60" width="1.00" height="194.20" rx="0" fill="#000" fill-opacity="0.05"/>
<rect x="765.72" y="132.60" width="1.00" height="194.20" rx="0" fill="#000" fill-opacity="0.05"/>
<rect x="796.25" y="132.60" width="1.00" height="194.20" rx="0" fill="#000" fill-opacity="0.05"/>
<rect x="434.00" y="160.80" width="391.00" height="1.00" rx="0" fill="#000" fill-opacity="0.05"/>
<rect x="434.00" y="191.33" width="391.00" height="1.00" rx="0" fill="#000" fill-opacity="0.05"/>
<rect x="434.00" y="221.86" width="391.00" height="1.00" rx="0" fill="#000" fill-opacity="0.05"/>
<rect x="434.00" y="252.39" width="391.00" height="1.00" rx="0" fill="#000" fill-opacity="0.05"/>
<rect x="434.00" y="282.92" width="391.00" height="1.00" rx="0" fill="#000" fill-opacity="0.05"/>
<rect x="434.00" y="313.45" width="391.00" height="1.00" rx="0" fill="#000" fill-opacity="0.05"/>
<rect x="272.00" y="326.80" width="699.00" height="9.30" rx="0" fill="#f8f9fb" />
<rect x="272.00" y="331.40" width="699.00" height="4.90" rx="0" fill="#ebebeb" />
<circle cx="619" cy="333.6" r="0.8" fill="#888"/>
<circle cx="622" cy="333.6" r="0.8" fill="#888"/>
<circle cx="625" cy="333.6" r="0.8" fill="#888"/>
<path d="M277.6 334.6 L279.6 332.6 L281.6 334.6 M285.4 332.6 L287.4 334.6 L289.4 332.6" fill="none" stroke="#888" stroke-width="0.7" stroke-linecap="round" stroke-linejoin="round" />
<circle cx="270.4" cy="336" r="0.55" fill="#888"/>
<circle cx="270.4" cy="338.6" r="0.55" fill="#888"/>
<circle cx="270.4" cy="341.2" r="0.55" fill="#888"/>
<rect x="272.50" y="336.10" width="697.50" height="228.90" rx="0" fill="#e8e8e8" />
<rect x="272.40" y="336.10" width="1.40" height="228.90" rx="0" fill="#b4b4b4" />
<rect x="272.40" y="335.80" width="134.00" height="0.80" rx="0" fill="#d0d0d0" />
<path d="M406.4 336.7 H841.3 V465 H809 V564 H406.4 Z" fill="#4b4b4b"/>
<path d="M410.3 336.7 H841.3 V362 H472 L440 350 Z" fill="#5a5a5a"/>
<rect x="406.40" y="336.70" width="3.90" height="227.30" rx="0" fill="#6a6a6a" />
<defs><pattern id="wood3" patternUnits="userSpaceOnUse" width="32" height="56" x="458" y="360"><rect width="32" height="56" fill="#bf9a66"/><rect x="0" y="0" width="8" height="30" fill="#c39f6c"/><rect x="16" y="20" width="8" height="36" fill="#b99460"/><rect x="24" y="0" width="8" height="18" fill="#c6a370"/><rect x="7.7" y="0" width="0.4" height="56" fill="#b28e5a"/><rect x="15.7" y="0" width="0.4" height="56" fill="#b5905c"/><rect x="23.7" y="0" width="0.4" height="56" fill="#b28e5a"/></pattern></defs>
<path d="M472.7 377.9 V412.5 H457.6 V539.5 H698.8 V506 H748 V493.1 H782 V461 H793 V428.2 H792.5 V348.5 H638 V361 H557.9 V377.9 Z" fill="url(#wood3)"/>
<rect x="637.00" y="348.50" width="2.50" height="145.50" rx="0" fill="#3c3c3c" />
<rect x="639.30" y="492.00" width="119.10" height="2.20" rx="0" fill="#3c3c3c" />
<rect x="434.60" y="351.30" width="18.60" height="56.70" rx="0" fill="#393939" />
<path d="M453.2 354.8 L472.7 357 V412.5 L453.2 408 Z" fill="#2c2c2c"/>
<rect x="460.00" y="375.00" width="5.00" height="20.00" rx="0" fill="#1f1f1f" />
<rect x="465.50" y="378.00" width="2.50" height="18.00" rx="0" fill="#aaa" />
<rect x="467.00" y="358.40" width="90.90" height="19.50" rx="0" fill="#a47d48" />
<rect x="467.00" y="376.90" width="90.90" height="1.50" rx="0" fill="#333" />
<rect x="466.00" y="354.50" width="92.00" height="0.70" rx="0" fill="#333" />
<rect x="494.00" y="354.80" width="25.70" height="17.20" rx="0" fill="#161616" />
<rect x="504.00" y="372.00" width="15.00" height="4.00" rx="0" fill="#111" />
<rect x="545.00" y="359.00" width="11.00" height="10.00" rx="0" fill="#222" />
<circle cx="525" cy="363" r="2.6" fill="#222"/><circle cx="534" cy="364" r="2" fill="#555"/>
<rect x="490.50" y="400.00" width="36.30" height="18.70" rx="0" fill="#333" />
<rect x="526.80" y="400.00" width="31.10" height="25.80" rx="0" fill="#a47d48" />
<rect x="498.40" y="418.70" width="59.50" height="7.10" rx="0" fill="#a47d48" />
<path d="M514 405 L520 402 L524 410 L518 413 Z" fill="#c59a5c"/><circle cx="540" cy="412" r="3" fill="#222"/>
<circle cx="516.2" cy="433.8" r="5" fill="#4a4a4a" stroke="#2a2a2a" stroke-width="0.8"/>
<circle cx="541" cy="433.8" r="5" fill="#4a4a4a" stroke="#2a2a2a" stroke-width="0.8"/>
<rect x="440.00" y="425.00" width="15.00" height="10.00" rx="0" fill="#777" />
<rect x="441.50" y="426.50" width="3.00" height="7.00" rx="0" fill="#ddd" />
<rect x="446.00" y="426.50" width="3.00" height="7.00" rx="0" fill="#ddd" />
<rect x="450.50" y="426.50" width="3.00" height="7.00" rx="0" fill="#ddd" />
<rect x="494.70" y="485.80" width="75.80" height="31.80" rx="0" fill="#9c9c9c" />
<path d="M498.5 462 H578 V498.6 H553 V485.8 H498.5 Z" fill="#5f5f5f"/>
<rect x="482.00" y="455.00" width="74.00" height="7.00" rx="0" fill="#b48a52" />
<rect x="517.40" y="494.00" width="28.40" height="16.00" rx="0" fill="#333" />
<ellipse cx="527" cy="502" rx="3" ry="2.4" fill="#cdbb98"/>
<rect x="484.00" y="527.40" width="92.00" height="12.10" rx="0" fill="#2e2e2e" />
<rect x="581.00" y="526.30" width="36.80" height="22.70" rx="0" fill="#1e1e1e" />
<circle cx="491.7" cy="510" r="6.5" fill="#111"/><circle cx="479" cy="531" r="5" fill="#222"/>
<rect x="439.80" y="450.50" width="18.90" height="72.00" rx="0" fill="#161616" />
<rect x="442.00" y="453.00" width="6.00" height="13.00" rx="0" fill="#e6e6e6" />
<rect x="449.50" y="453.00" width="6.00" height="13.00" rx="0" fill="#e6e6e6" />
<rect x="442.00" y="470.50" width="6.00" height="13.00" rx="0" fill="#e6e6e6" />
<rect x="449.50" y="470.50" width="6.00" height="13.00" rx="0" fill="#e6e6e6" />
<rect x="442.00" y="488.00" width="6.00" height="13.00" rx="0" fill="#e6e6e6" />
<rect x="449.50" y="488.00" width="6.00" height="13.00" rx="0" fill="#e6e6e6" />
<rect x="442.00" y="505.50" width="6.00" height="13.00" rx="0" fill="#e6e6e6" />
<rect x="449.50" y="505.50" width="6.00" height="13.00" rx="0" fill="#e6e6e6" />
<path d="M458 455 L480 451 L478 472 L458 474 Z M458 502 L480 498 L478 520 L458 522 Z" fill="#2b2b2b"/>
<rect x="625.60" y="411.40" width="11.90" height="56.10" rx="0" fill="#8e8e8e" />
<rect x="685.00" y="344.40" width="57.40" height="6.30" rx="0" fill="#c9c9c9" />
<path d="M683 350 H741 V414.7 H683 Z" fill="#2f2f2f"/>
<rect x="657.70" y="347.40" width="19.60" height="11.20" rx="0" fill="#2a2a2a" />
<rect x="747.60" y="345.30" width="19.50" height="12.00" rx="0" fill="#2a2a2a" />
<rect x="792.50" y="337.20" width="24.00" height="34.80" rx="0" fill="#5a4a34" />
<rect x="794.00" y="343.00" width="21.00" height="5.00" rx="0" fill="#8d6f45" />
<rect x="794.00" y="358.00" width="21.00" height="6.00" rx="0" fill="#8d6f45" />
<rect x="792.50" y="372.00" width="24.00" height="56.20" rx="0" fill="#8d8d8d" />
<rect x="816.50" y="337.20" width="21.40" height="86.50" rx="0" fill="#cfcfcf" />
<rect x="799.70" y="431.60" width="18.40" height="15.30" rx="0" fill="#a8a8a8" />
<circle cx="804.6" cy="455.2" r="4" fill="#111"/><circle cx="823.3" cy="455.2" r="4.5" fill="#111" stroke="#ddd" stroke-width="1.2"/>
<path d="M670 474 Q675 462 684 468 Q697 478 692 488 Q684 494 674 486 Q668 480 670 474 Z" fill="#7a7a7a"/>
<path d="M699 484 Q700 474 712 476 Q725 478 730 468 Q742 466 742 478 Q738 492 716 492 Q700 494 699 484 Z" fill="#7a7a7a"/>
<circle cx="655" cy="482" r="3.5" fill="#3a3020"/>
<path d="M698.8 506 H745 L750 490.4 L779.7 490.4 L775 536.5 H698.8 Z" fill="#6d6d6d"/>
<rect x="698.80" y="506.00" width="46.20" height="2.00" rx="0" fill="#555" />
<rect x="705.00" y="508.00" width="0.60" height="27.00" rx="0" fill="#9a8a70" />
<rect x="711.20" y="508.00" width="0.60" height="27.00" rx="0" fill="#9a8a70" />
<rect x="717.40" y="508.00" width="0.60" height="27.00" rx="0" fill="#9a8a70" />
<rect x="723.60" y="508.00" width="0.60" height="27.00" rx="0" fill="#9a8a70" />
<rect x="729.80" y="508.00" width="0.60" height="27.00" rx="0" fill="#9a8a70" />
<rect x="736.00" y="508.00" width="0.60" height="27.00" rx="0" fill="#9a8a70" />
<rect x="742.20" y="508.00" width="0.60" height="27.00" rx="0" fill="#9a8a70" />
<path d="M745 506 L775 536.5 M748 499 L778 520" stroke="#8a7a60" stroke-width="0.6"/>
<rect x="750.50" y="491.00" width="8.50" height="25.00" rx="0" fill="#5f5f5f" />
<path d="M645 542 H755 L764 555.6 H648 Z" fill="#2b2b2b"/>
<line x1="664.00" y1="542.00" x2="667.50" y2="555.60" stroke="#555" stroke-width="0.6" />
<line x1="683.00" y1="542.00" x2="687.00" y2="555.60" stroke="#555" stroke-width="0.6" />
<line x1="702.00" y1="542.00" x2="706.50" y2="555.60" stroke="#555" stroke-width="0.6" />
<line x1="721.00" y1="542.00" x2="726.00" y2="555.60" stroke="#555" stroke-width="0.6" />
<line x1="740.00" y1="542.00" x2="745.50" y2="555.60" stroke="#555" stroke-width="0.6" />
<line x1="646.00" y1="549.00" x2="760.00" y2="549.00" stroke="#555" stroke-width="0.6" />
<path d="M633 530 Q640 524 645 531 Q652 530 651 537 Q645 544 636 540 Q630 536 633 530 Z" fill="#111"/>
<rect x="841.30" y="336.70" width="2.00" height="130.30" rx="0" fill="#6a6a6a" />
<rect x="808.30" y="465.00" width="35.00" height="2.00" rx="0" fill="#6a6a6a" />
<rect x="808.30" y="465.00" width="2.00" height="99.00" rx="0" fill="#6a6a6a" />
<defs><linearGradient id="bgr" x1="0" y1="0" x2="0" y2="1"><stop offset="0" stop-color="#e8e8e8" stop-opacity="0"/><stop offset="1" stop-color="#d6d6d6"/></linearGradient></defs>
<rect x="273.40" y="553.00" width="133.00" height="12.00" rx="0" fill="url(#bgr)" />
<rect x="810.30" y="553.00" width="159.70" height="12.00" rx="0" fill="url(#bgr)" />
<rect x="279.6" y="342.5" width="16.1" height="34.2" rx="3.5" fill="#fbfbfb"/>
<path d="M284.4 353.2 L287.7 349.6 L291 353.2 M286.4 351.6 V357.4 M289 351.6 V357.4" fill="none" stroke="#444" stroke-width="0.8" stroke-linecap="round" stroke-linejoin="round" />
<rect x="281.80" y="359.00" width="11.80" height="0.40" rx="0" fill="#aaa" />
<path d="M286.4 361.4 V365.6 M289 361.4 V365.6 M286.4 365.6 H282.6 L287.7 370.2 L292.8 365.6 H289" fill="none" stroke="#444" stroke-width="0.8" stroke-linecap="round" stroke-linejoin="round" />
<circle cx="296.8" cy="542.6" r="17" fill="#fafafa" stroke="#5a5a5a" stroke-width="0.95"/>
<path d="M293.3 531.6 Q293.3 530.5 294.4 530.5 H299.2 Q300.3 530.5 300.3 531.6 V536.8 L296.8 539.8 L293.3 536.8 Z M293.3 553.6 Q293.3 554.7 294.4 554.7 H299.2 Q300.3 554.7 300.3 553.6 V548.4 L296.8 545.4 L293.3 548.4 Z M285.9 539.1 H291.1 L294.1 542.6 L291.1 546.1 H285.9 Q284.8 546.1 284.8 545 V540.2 Q284.8 539.1 285.9 539.1 Z M307.7 539.1 H302.5 L299.5 542.6 L302.5 546.1 H307.7 Q308.8 546.1 308.8 545 V540.2 Q308.8 539.1 307.7 539.1 Z" fill="none" stroke="#555" stroke-width="0.8" stroke-linecap="round" stroke-linejoin="round" />
<polygon points="136.60,185.00 175.05,207.20 175.05,251.60 136.60,273.80 98.15,251.60 98.15,207.20" fill="#afc7f8" stroke="#6a93e7" stroke-width="1.1" stroke-linejoin="round"/>
<polygon points="175.05,251.60 136.60,273.80 98.15,251.60 101.18,249.85 136.60,270.30 172.02,249.85" fill="#7098eb" stroke="#6a93e7" stroke-width="0.6"/>
<polygon points="136.60,188.50 172.02,208.95 172.02,249.85 136.60,270.30 101.18,249.85 101.18,208.95" fill="#c3d5fc" stroke="#5d86de" stroke-width="0.7"/>
<line x1="136.60" y1="230.60" x2="136.60" y2="188.50" stroke="#5d86de" stroke-width="0.7"/>
<line x1="136.60" y1="230.60" x2="172.02" y2="249.85" stroke="#5d86de" stroke-width="0.7"/>
<line x1="136.60" y1="230.60" x2="101.18" y2="249.85" stroke="#5d86de" stroke-width="0.7"/>
<polygon points="145.10,203.90 133.50,203.90 121.50,211.00 121.50,221.50 132.90,214.60 132.90,252.40 145.10,252.40" fill="#000"/>
<polygon points="136.20,404.30 174.65,426.50 174.65,470.90 136.20,493.10 97.75,470.90 97.75,426.50" fill="#afc7f8" stroke="#6a93e7" stroke-width="1.1" stroke-linejoin="round"/>
<polygon points="174.65,470.90 136.20,493.10 97.75,470.90 100.78,469.15 136.20,489.60 171.62,469.15" fill="#7098eb" stroke="#6a93e7" stroke-width="0.6"/>
<polygon points="136.20,407.80 171.62,428.25 171.62,469.15 136.20,489.60 100.78,469.15 100.78,428.25" fill="#c3d5fc" stroke="#5d86de" stroke-width="0.7"/>
<line x1="136.20" y1="449.90" x2="136.20" y2="407.80" stroke="#5d86de" stroke-width="0.7"/>
<line x1="136.20" y1="449.90" x2="171.62" y2="469.15" stroke="#5d86de" stroke-width="0.7"/>
<line x1="136.20" y1="449.90" x2="100.78" y2="469.15" stroke="#5d86de" stroke-width="0.7"/>
<text x="0" y="0" font-size="70.5" font-weight="bold" fill="#000" stroke="#000" stroke-width="0.9" text-anchor="middle" transform="translate(137.20,471.29) scale(1.019,0.974)">2</text>
<polygon points="586.20,184.60 624.65,206.80 624.65,251.20 586.20,273.40 547.75,251.20 547.75,206.80" fill="#afc7f8" stroke="#6a93e7" stroke-width="1.1" stroke-linejoin="round"/>
<polygon points="624.65,251.20 586.20,273.40 547.75,251.20 550.78,249.45 586.20,269.90 621.62,249.45" fill="#7098eb" stroke="#6a93e7" stroke-width="0.6"/>
<polygon points="586.20,188.10 621.62,208.55 621.62,249.45 586.20,269.90 550.78,249.45 550.78,208.55" fill="#c3d5fc" stroke="#5d86de" stroke-width="0.7"/>
<line x1="586.20" y1="230.20" x2="586.20" y2="188.10" stroke="#5d86de" stroke-width="0.7"/>
<line x1="586.20" y1="230.20" x2="621.62" y2="249.45" stroke="#5d86de" stroke-width="0.7"/>
<line x1="586.20" y1="230.20" x2="550.78" y2="249.45" stroke="#5d86de" stroke-width="0.7"/>
<text x="0" y="0" font-size="70.5" font-weight="bold" fill="#000" stroke="#000" stroke-width="0.9" text-anchor="middle" transform="translate(586.80,251.85) scale(1.074,0.967)">3</text>
<polygon points="586.50,405.00 624.95,427.20 624.95,471.60 586.50,493.80 548.05,471.60 548.05,427.20" fill="#afc7f8" stroke="#6a93e7" stroke-width="1.1" stroke-linejoin="round"/>
<polygon points="624.95,471.60 586.50,493.80 548.05,471.60 551.08,469.85 586.50,490.30 621.92,469.85" fill="#7098eb" stroke="#6a93e7" stroke-width="0.6"/>
<polygon points="586.50,408.50 621.92,428.95 621.92,469.85 586.50,490.30 551.08,469.85 551.08,428.95" fill="#c3d5fc" stroke="#5d86de" stroke-width="0.7"/>
<line x1="586.50" y1="450.60" x2="586.50" y2="408.50" stroke="#5d86de" stroke-width="0.7"/>
<line x1="586.50" y1="450.60" x2="621.92" y2="469.85" stroke="#5d86de" stroke-width="0.7"/>
<line x1="586.50" y1="450.60" x2="551.08" y2="469.85" stroke="#5d86de" stroke-width="0.7"/>
<text x="0" y="0" font-size="70.5" font-weight="bold" fill="#000" stroke="#000" stroke-width="0.9" text-anchor="middle" transform="translate(584.00,472.10) scale(1.049,0.967)">4</text>
</svg>
</body></html>
